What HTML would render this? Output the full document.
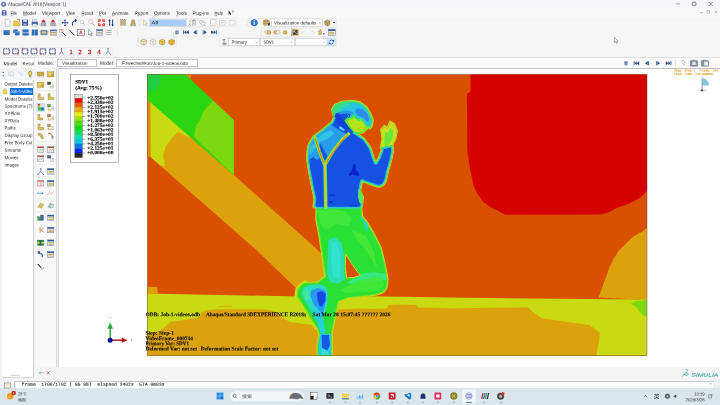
<!DOCTYPE html>
<html lang="en">
<head>
<meta charset="utf-8">
<title>Abaqus/CAE 2018 [Viewport: 1]</title>
<style>
html,body{margin:0;padding:0;}
body{width:720px;height:405px;overflow:hidden;background:#f3f4f6;position:relative;font-family:"Liberation Sans","Noto Sans CJK SC",sans-serif;color:#1a1a1a;}
.abs{position:absolute;}
.t{position:absolute;white-space:pre;line-height:1;}
#titlebar{left:0;top:0;width:720px;height:8.5px;background:#f6f6fa;}
#menubar{left:0;top:8.5px;width:720px;height:9px;background:#f8f8f9;border-bottom:0.6px solid #d8d8da;}
#toolzone{left:0;top:18px;width:720px;height:39px;background:#f6f6f7;}
#ctxbar{left:0;top:56.6px;width:720px;height:11.4px;background:#fafafb;border-top:0.6px solid #e2e2e4;box-sizing:border-box;}
#tree{left:1.6px;top:80px;width:31.2px;height:297.2px;background:#ffffff;border-right:0.7px solid #d4d4d4;border-bottom:0.6px solid #d4d4d4;}
#toolbox{left:35.6px;top:68.6px;width:20.6px;height:299.6px;background:#f9f9fa;border-right:1.2px solid #d6d6d8;}
#viewport{left:57.5px;top:68px;width:662.5px;height:299px;background:#ffffff;border-top:0.6px solid #bfc3c8;border-left:0.6px solid #d5d5d5;box-sizing:border-box;}
#prompt{left:34px;top:367px;width:686px;height:13px;background:#f4f4f5;}
#msg{left:14.4px;top:380.6px;width:699px;height:7px;background:#ffffff;border-top:0.6px solid #c8c8c8;border-left:0.5px solid #c8c8c8;}
#taskbar{left:0;top:387.5px;width:720px;height:17.5px;background:#dbe6ea;}
.menu{font-size:4.6px;top:10.6px;color:#222;}
.tree{font-size:4.4px;left:4px;color:#222;}
.ser{font-family:"Liberation Serif",serif;font-weight:bold;color:#0a0a0a;-webkit-text-stroke:0.1px #0a0a0a;}
.lg{-webkit-text-stroke:0.12px #0a0a0a;}
.mono{font-family:"Liberation Mono",monospace;color:#e09a20;-webkit-text-stroke:0.12px #e09a20;}
</style>
</head>
<body>
<div id="titlebar" class="abs"></div>
<div id="menubar" class="abs"></div>
<div id="toolzone" class="abs"></div>
<div id="ctxbar" class="abs"></div>
<div id="tree" class="abs"></div>
<div id="toolbox" class="abs"></div>
<div id="viewport" class="abs"></div>
<div id="prompt" class="abs"></div>
<div id="msg" class="abs"></div>
<div id="taskbar" class="abs"></div>

<!-- PLOT -->
<svg class="abs" style="left:0;top:0" width="720" height="405" viewBox="0 0 720 405" id="plot">
<defs>
<clipPath id="pc"><rect x="147.5" y="74.5" width="499.5" height="281"/></clipPath>
</defs>
<g clip-path="url(#pc)">
<rect x="147" y="74" width="501" height="282" fill="#d95000"/>
<!-- red blob -->
<path d="M470.5,74 L470.5,92 L467,93.5 L467.3,150 L469.5,166 L473.6,186 L478,195 L483,201.4 L490,207 L498.6,211 L505.5,214.7 L601,214.5 L609,212 L616.7,208 L628,204 L639,198.6 L644,194 L648,189 L648,74 Z" fill="#d50000"/>
<!-- right wedge orange-yellow -->
<path d="M648,227 L641.7,232 L634,236 L627.8,241.7 L619.4,250 L614,258 L609.7,266.7 L606,277 L602.8,286 L598.6,297.5 L648,300 Z" fill="#dca20c"/>
<!-- diagonal band: yellow/orange part -->
<path d="M147,99 L150,99.5 L233.75,175 L315,247.5 L336,268 L336,300 L300,292 L257.5,251 L151,157.5 L147,152 Z" fill="#dca20c"/>
<!-- yellow part of band -->
<path d="M150.5,100 L193,138 L186,136 L178,132 L172,138 L166,146 L163,155 L165,166 L160,165 L151,157.5 Z" fill="#c9d912"/>
<!-- thin orange strip at left edge -->
<rect x="147" y="99" width="3" height="58" fill="#e08a08"/>
<!-- green band -->
<path d="M147,74 L185,74 L233.75,120 L233.75,175 L147,99.5 Z" fill="#2cd512"/>
<!-- lighter green part -->
<path d="M210,103.5 L213.2,100.8 L233.75,120 L233.75,175 L194,137 L196,126 L200,120 L203,112 L207,107 Z" fill="#7dd90f"/>
<path d="M147,74 L160,74 L161,82 L156,90 L147,92 Z" fill="#22cc44"/>
<!-- small orange notch at top -->
<path d="M185,74 L191,74 L191,78.5 L189,78 Z" fill="#e08a08"/>

<!-- floor: yellow -->
<path d="M147,293.5 L300,296.5 L370,296.2 L450,297.6 L530,298.4 L648,299.5 L648,356 L147,356 Z" fill="#c9d912"/>
<!-- orange bit above floor at left -->
<path d="M147,287 L157,287 L158,293.7 L147,293.5 Z" fill="#dca20c"/>
<!-- floor: orange-yellow -->
<path d="M147,333 L160,331 L165,327 L170,322 L185,320 L200,317 L202,312 L208,310 L220,309.3 L262,309.3 L272,310.5 L278,313 L283,318 L290,322 L305,324 L315,325 L336,318 L338,309.5 L360,308.5 L372,309 L387,308.5 L388.5,305 L400,304.5 L416.5,305 L418,307.5 L430,307.8 L450,308.3 L500,307.8 L527.8,307.3 L534,313 L541.7,318 L560,321 L589,325 L595,329 L600,333 L599,342 L596,356 L147,356 Z" fill="#dca20c"/>
<path d="M218,306 L232,305.6 L232,306.6 L218,306.8 Z" fill="#dca20c"/>
<!-- green bit right -->
<path d="M648,300 L636,301 L630.5,304 L636,307 L640,312 L644,316 L648,317 Z" fill="#7dd90f"/>
<!-- FIGURE -->
<defs>
<path id="sil" d="M333.9,117 L331.9,109.5 L334.4,105.1 L342.2,101.6 L352.2,100.6 L360,102.1 L366.7,107.1 L370.6,114 L372.9,120.1 L371.9,126 L370.2,128.9 L367.8,127 L366.7,129 L363.3,132.4 L357.5,134 L364.1,138.5 L370.5,147.5 L373.8,157.8 L375.8,162.7 L378.7,157.8 L381.6,150 L380.7,147 L382.4,138.5 L381.1,129.5 L384.4,125.6 L387.2,128.2 L390,121.5 L394.3,124 L396.9,130.7 L395.6,138.5 L392.6,144.3 L393.3,150 L391.4,159.7 L387.5,173.4 Q386.6,180.5 384.5,183.5 Q382,187.3 378,186.8 L368,183.5 L362.1,181.2 L360.2,190.9 L363.1,196.8 L362.1,206.5 L361.4,208.5 L362.3,216.3 L367.5,223 L373.8,233.6 L380.7,247.3 L384.6,262.9 L387.5,278.5 Q388,288 384,291.5 Q380,294.5 371.9,295.3 L348.5,297.8 L338.7,301.4 L336.8,309.2 L334.8,319 L331.9,332.6 L332,356 L317.3,356 L317.3,344.3 L319.2,334.6 L317.3,328.7 L309.5,317 L301.7,303.4 L296.8,296.6 L297.6,289 L303.6,282.8 L317.3,282.4 L325.1,276.5 L322.2,255.1 L319.2,235.6 L316.3,220 L316.3,208.5 L313.4,206.5 L314.4,198.7 L311.4,185.1 L308.5,169.5 L306.8,158 L307.5,150 L308.7,144.3 L313.4,136.5 L321.2,130.7 L331.9,121.9 Z"/>
<path id="torso" d="M333.9,117 L336,112.5 L341,114 L346,113.5 L349,115.8 L344.4,120.7 L349,127 L353.3,131.8 L357.5,134 L364.1,138.5 L370.5,147.5 L373.8,157.8 L375.8,162.7 L378.7,157.8 L381.6,150 L380.9,147.5 L392.6,145.3 L393.3,150 L391.4,159.7 L387.5,173.4 Q386.6,180.5 384.5,183.5 Q382,187.3 378,186.8 L368,183.5 L362.1,181.2 L360.2,190.9 L363.1,196.8 L362.1,206.5 L361.4,208.8 L316.3,208.8 L313.4,206.5 L314.4,198.7 L311.4,185.1 L308.5,169.5 L306.8,158 L307.5,150 L308.7,144.3 L313.4,136.5 L321.2,130.7 L331.9,121.9 Z"/>
<path id="hair" d="M333.9,117 L331.9,109.5 L334.4,105.1 L342.2,101.6 L352.2,100.6 L360,102.1 L366.7,107.1 L370.6,114 L372.9,120.1 L371.9,126 L370.2,128.9 L367.8,127 L365.6,124 L361,118.5 L358,119.6 L355.5,117.5 L353.3,114.5 L352,117.5 L348,118 L349,115.8 L346,113.5 L341,114 L336,112.5 Z"/>
<path id="hand" d="M382.4,138.5 L381.1,129.5 L384.4,125.6 L387.2,128.2 L390,121.5 L394.3,124 L396.9,130.7 L395.6,138.5 L392.6,144.3 L392.6,145.3 L380.9,147.5 Z"/>
<clipPath id="cs"><use href="#sil"/></clipPath>
<clipPath id="ct"><use href="#torso"/></clipPath>
<clipPath id="ch"><use href="#hair"/></clipPath>
<clipPath id="chd"><use href="#hand"/></clipPath>
</defs>
<g stroke-linejoin="round">
<path d="M305,282.6 L297.6,289 L296.8,296.6 L301.7,303.4 L309.5,317 L316.5,327.5" stroke="#c6de18" stroke-width="4.6" fill="none" stroke-linecap="round"/>
<use href="#sil" fill="#2ae034" stroke="#c4dc18" stroke-width="1.8"/>
<g clip-path="url(#cs)">
<use href="#sil" fill="#2ae034"/>
<!-- trousers shading -->
<path d="M328.5,240 L335,237 L341,242 L344.2,254 L344.4,266 L345,279 L338,283.5 L330,282 L327,274 L327.5,258 Z" fill="#2cdcb4"/>
<path d="M331.5,243 L336.5,241.5 L340,252 L341,266 L340,277 L333,278 L331,262 Z" fill="#30e4d4" opacity=".85"/>
<path d="M361,273.5 L374,272 L386,274 L386.5,280 L374,281 L362,280.5 L352,284 L347,283 Z" fill="#38e890" opacity=".85"/>
<path d="M318,210 L330,209 L345,211 L352,218 L349,226 L336,224 L326,230 L321,226 Z" fill="#44e83c" opacity=".8"/>
<path d="M352,230 L366,236 L374,252 L377,268 L373,262 L366,250 L357,240 Z" fill="#4ce838" opacity=".8"/>
<path d="M360.5,216.5 L363,217.5 L367.5,225 L369,232 L366.5,231 L363.5,224 Z" fill="#28d0d0" opacity=".9"/>
<path d="M360,280 L382,276 L384,286 L378,291 L362,292 L345,293 L340,290 Z" fill="#44e83c" opacity=".8"/>
<!-- bent-leg shoe -->
<path d="M303,288.5 L309,285 L318,284.2 L325,286 L328,292 L327.5,303 L325,312 L322,322 L319,326 L316,320 L311,311 L305,301 L301.5,294 Z" fill="#2cdcc0"/>
<path d="M311,290.5 L318,288 L325.5,290.5 L326.5,300 L324,309 L321.5,320 L319.5,322 L317.5,312 L313,303 L310.5,296 Z" fill="#2898f0"/>
<path d="M317,292.5 L322,291 L325.8,294 L325,301 L322,306.8 L319.5,306 L317.5,300 Z" fill="#1448e0"/>
<path d="M302.5,292 L307.5,288.5 L310,299 L306.5,301.5 Z" fill="#40e8a0"/>
<path d="M311,311 L317,321.5 L320.5,333.5 L326,333.5 L324,322 L321,313 L316,306 Z" fill="#28d0d8"/>
<path d="M316,309 L320.5,316 L323,326 L321,318 Z" fill="#2898f0"/>
<!-- standing foot -->
<path d="M319.5,334 L331,334 L331.2,356 L318.5,356 L318.6,344 Z" fill="#28c8e8"/>
<path d="M321.5,335 L329,335 L330,345 L327,351 L322,348 Z" fill="#1858e8"/>
<path d="M322,348 L328,351 L329,356 L321,356 Z" fill="#2ee0d0"/>
<use href="#sil" fill="none" stroke="#7ce428" stroke-width="1.6"/>
</g>
<!-- leg gap -->
<path d="M345.6,254.1 L352.4,264.8 L360.2,275.6 L353,277.5 L346.5,277.9 L345.4,266.8 Z" fill="#d95000" stroke="#c4dc18" stroke-width="1"/>
<!-- torso -->
<g clip-path="url(#ct)">
<use href="#torso" fill="#1552e2"/>
<!-- upper back lighter patches -->
<path d="M306,151 L308.7,144 L313.4,136.5 L321.2,130.7 L331,124.5 L336,128 L341,131 L346,134 L338,142 L332,150 L328,157 L324,150 L320,143 L319,150 L321,157 L317,160 L313,157 L309,160 L306,160 Z" fill="#2a9cec"/>
<path d="M316,139 L324,133 L331,130.5 L334,134 L327,139 L320,142 L316,148 L311,150 Z" fill="#30c4e6"/>
<path d="M309,147 L313,144 L314,151 L310,155 Z" fill="#30b8ea"/>
<path d="M340,125.5 L346,128 L344,131 L339,128.5 Z" fill="#60d0f0"/>
<!-- collar darker -->
<path d="M334,117 L338,114 L345,121 L350,129 L347,131 L340,126 L336,122 Z" fill="#1040d8"/>
<!-- dark spots on torso -->
<path d="M353.5,164 L355,164.5 L356,170 L359.5,174 L358,176 L353,174.5 L349.5,176 L348.8,174 L352,170 Z" fill="#0a20c8"/>
<rect x="329" y="194.5" width="6" height="1.2" fill="#0a28c8"/><rect x="329.5" y="201" width="2.5" height="2.2" fill="#0a28c8"/>
<rect x="349" y="205.3" width="8" height="1" fill="#0a28c8"/>
<path d="M353.3,131.8 L357.5,134 L364.1,138.5 L370.5,147.5 L373.8,157.8 L375.8,162.7 L378.7,157.8 L381.6,150 L380.9,147.5 L392.6,145.3 L393.3,150 L391.4,159.7 L387.5,173.4 Q386.6,180.5 384.5,183.5 Q382,187.3 378,186.8 L368,183.5 L362.1,181.2 L360.2,190.9 L363.1,196.8 L362.1,206.5 L361.4,208.8 L316.3,208.8 L313.4,206.5 L314.4,198.7 L311.4,185.1 L308.5,169.5 L306.8,158 L307.5,150 L308.7,144.3 L313.4,136.5 L321.2,130.7 L331.9,121.9 L333.9,117" fill="none" stroke="#28b8ea" stroke-width="4"/>
<path d="M353.3,131.8 L357.5,134 L364.1,138.5 L370.5,147.5 L373.8,157.8 L375.8,162.7 L378.7,157.8 L381.6,150 L380.9,147.5 L392.6,145.3 L393.3,150 L391.4,159.7 L387.5,173.4 Q386.6,180.5 384.5,183.5 Q382,187.3 378,186.8 L368,183.5 L362.1,181.2 L360.2,190.9 L363.1,196.8 L362.1,206.5 L361.4,208.8 L316.3,208.8 L313.4,206.5 L314.4,198.7 L311.4,185.1 L308.5,169.5 L306.8,158 L307.5,150 L308.7,144.3 L313.4,136.5 L321.2,130.7 L331.9,121.9 L333.9,117" fill="none" stroke="#38e070" stroke-width="2.2"/>
<use href="#sil" fill="none" stroke="#a8e020" stroke-width="1"/>
<!-- suspenders -->
<path d="M314.6,136.6 L319.3,151.5 L324.6,165" fill="none" stroke="#48e068" stroke-width="3.4"/>
<path d="M349.5,133 L342,139.5 L333,151 L325,164.5 L325.3,180 L325.8,209" fill="none" stroke="#48e068" stroke-width="3.6"/>
<path d="M314.6,136.6 L319.3,151.5 L324.6,165" fill="none" stroke="#d8d020" stroke-width="1.9"/>
<path d="M349.5,133 L342,139.5 L333,151 L325,164.5 L325.3,180 L325.8,209" fill="none" stroke="#d8d020" stroke-width="2"/>
<path d="M315,138 L319.6,152 L323.6,162.5" fill="none" stroke="#e06810" stroke-width="0.9"/>
<path d="M348,134.5 L342,140.5 L333.5,151.5 L326.5,162.5" fill="none" stroke="#e06810" stroke-width="1"/>
<path d="M358.5,189 L361,191 L362.8,197 L362,204 L359.5,203 L358,197 Z" fill="#58e860"/>
</g>
<!-- hair -->
<g clip-path="url(#ch)">
<use href="#hair" fill="#26c4e0"/>
<path d="M357,108 L363,109.5 L367.5,114 L369.5,120 L367,122 L363,117.5 L358.5,116 L355,112 Z" fill="#2c8cec"/>
<path d="M332,114 L339,112.5 L346,112 L351,114 L349,119 L343,122 L336,122 L332,119 Z" fill="#1858e0"/>
<path d="M338,113 L346,110.5 L352,111.5 L354,113.5 L350,114 L346,113 L341,114.5 Z" fill="#2898ee"/>
<path d="M333.9,117 L331.9,109.5 L334.4,105.1 L342.2,101.6 L352.2,100.6 L360,102.1 L366.7,107.1 L370.6,114 L372.9,120.1 L371.9,126 L370.2,128.9 L367.8,127" fill="none" stroke="#38e070" stroke-width="3.4"/>
<path d="M331.9,109.5 L334.4,105.1 L342.2,101.6 L352.2,100.6 L360,102.1 L366.7,107.1 L370.6,114 L372.9,120.1 L371.9,126 L370.2,128.9 L367.8,127" fill="none" stroke="#a8e020" stroke-width="1.2"/>
<path d="M331,110 L334,104.5 L342,101 L349,100.5 L347,103.8 L341,105.5 L337.5,108.5 L336,113 L334.5,117 Z" fill="#38e070"/>
<path d="M337.5,108.5 L341,105.5 L347,103.8 L352,104 L347,106 L342,108 L339,112 L336,113 Z" fill="#30dca0"/>
</g>
<!-- face -->
<path d="M344.4,120.7 L348,118 L352,117.5 L353.3,114.5 L355.5,117.5 L358,119.6 L361,118.5 L365.6,124 L367.8,127 L366.7,129 L363.3,132.4 L357.5,134 L353.3,131.8 L349,127 Z" fill="#5ae840"/>
<path d="M347.5,121 L350,119.5 L353,119.3 L354,117.3 L355.5,119.3 L358.3,121.2 L361,120.5 L364.3,124.5 L365.5,128 L362.8,131 L357.7,132.6 L354,130.8 L350.5,126.5 Z" fill="#b4e21c"/>
<!-- hand -->
<g clip-path="url(#chd)">
<use href="#hand" fill="#c6e21c"/>
<path d="M385,131.5 L387.5,133 L390.5,128 L393.5,131 L392.5,138 L389.5,144 L384.5,148 L384.5,139 Z" fill="#6ae638"/>
<path d="M381.1,129.5 L384.4,125.6 L387.2,128.2 L390,121.5 L394.3,124 L396.9,130.7" fill="none" stroke="#e8b81c" stroke-width="1.8"/>
</g>
</g>


</g>
<rect x="147.5" y="74.5" width="499.5" height="281" fill="none" stroke="#5a3a10" stroke-width="0.4"/>
<rect x="70.4" y="74.2" width="48.2" height="88" fill="#ffffff" stroke="#666" stroke-width="0.5"/>
<rect x="74.8" y="94.30" width="7.6" height="3.95" fill="#dcdcdc"/>
<rect x="74.8" y="98.20" width="7.6" height="4.62" fill="#ee0000"/>
<line x1="74.8" y1="98.20" x2="82.4" y2="98.20" stroke="#222" stroke-width="0.3" opacity="0.55"/>
<rect x="74.8" y="102.77" width="7.6" height="4.62" fill="#ee5800"/>
<line x1="74.8" y1="102.77" x2="82.4" y2="102.77" stroke="#222" stroke-width="0.3" opacity="0.55"/>
<rect x="74.8" y="107.34" width="7.6" height="4.62" fill="#eeaa00"/>
<line x1="74.8" y1="107.34" x2="82.4" y2="107.34" stroke="#222" stroke-width="0.3" opacity="0.55"/>
<rect x="74.8" y="111.91" width="7.6" height="4.62" fill="#e8ee00"/>
<line x1="74.8" y1="111.91" x2="82.4" y2="111.91" stroke="#222" stroke-width="0.3" opacity="0.55"/>
<rect x="74.8" y="116.48" width="7.6" height="4.62" fill="#98e800"/>
<line x1="74.8" y1="116.48" x2="82.4" y2="116.48" stroke="#222" stroke-width="0.3" opacity="0.55"/>
<rect x="74.8" y="121.05" width="7.6" height="4.62" fill="#44e000"/>
<line x1="74.8" y1="121.05" x2="82.4" y2="121.05" stroke="#222" stroke-width="0.3" opacity="0.55"/>
<rect x="74.8" y="125.62" width="7.6" height="4.62" fill="#08e008"/>
<line x1="74.8" y1="125.62" x2="82.4" y2="125.62" stroke="#222" stroke-width="0.3" opacity="0.55"/>
<rect x="74.8" y="130.19" width="7.6" height="4.62" fill="#00e058"/>
<line x1="74.8" y1="130.19" x2="82.4" y2="130.19" stroke="#222" stroke-width="0.3" opacity="0.55"/>
<rect x="74.8" y="134.76" width="7.6" height="4.62" fill="#00e4b0"/>
<line x1="74.8" y1="134.76" x2="82.4" y2="134.76" stroke="#222" stroke-width="0.3" opacity="0.55"/>
<rect x="74.8" y="139.33" width="7.6" height="4.62" fill="#00c8f0"/>
<line x1="74.8" y1="139.33" x2="82.4" y2="139.33" stroke="#222" stroke-width="0.3" opacity="0.55"/>
<rect x="74.8" y="143.90" width="7.6" height="4.62" fill="#0078f0"/>
<line x1="74.8" y1="143.90" x2="82.4" y2="143.90" stroke="#222" stroke-width="0.3" opacity="0.55"/>
<rect x="74.8" y="148.47" width="7.6" height="4.62" fill="#0028f0"/>
<line x1="74.8" y1="148.47" x2="82.4" y2="148.47" stroke="#222" stroke-width="0.3" opacity="0.55"/>
<rect x="74.8" y="153.04" width="7.6" height="4.65" fill="#2a2a2a"/>
<line x1="74.8" y1="153.04" x2="82.4" y2="153.04" stroke="#222" stroke-width="0.3" opacity="0.55"/>
<rect x="74.8" y="94.3" width="7.6" height="63.34" fill="none" stroke="#555" stroke-width="0.35"/>
<line x1="82.4" y1="98.20" x2="85" y2="98.20" stroke="#333" stroke-width="0.4"/>
<line x1="82.4" y1="102.77" x2="85" y2="102.77" stroke="#333" stroke-width="0.4"/>
<line x1="82.4" y1="107.34" x2="85" y2="107.34" stroke="#333" stroke-width="0.4"/>
<line x1="82.4" y1="111.91" x2="85" y2="111.91" stroke="#333" stroke-width="0.4"/>
<line x1="82.4" y1="116.48" x2="85" y2="116.48" stroke="#333" stroke-width="0.4"/>
<line x1="82.4" y1="121.05" x2="85" y2="121.05" stroke="#333" stroke-width="0.4"/>
<line x1="82.4" y1="125.62" x2="85" y2="125.62" stroke="#333" stroke-width="0.4"/>
<line x1="82.4" y1="130.19" x2="85" y2="130.19" stroke="#333" stroke-width="0.4"/>
<line x1="82.4" y1="134.76" x2="85" y2="134.76" stroke="#333" stroke-width="0.4"/>
<line x1="82.4" y1="139.33" x2="85" y2="139.33" stroke="#333" stroke-width="0.4"/>
<line x1="82.4" y1="143.90" x2="85" y2="143.90" stroke="#333" stroke-width="0.4"/>
<line x1="82.4" y1="148.47" x2="85" y2="148.47" stroke="#333" stroke-width="0.4"/>
<line x1="82.4" y1="153.04" x2="85" y2="153.04" stroke="#333" stroke-width="0.4"/>
<line x1="110.2" y1="340" x2="110.2" y2="327" stroke="#28a838" stroke-width="1.5"/><path d="M110.2,322.3 L113,328.8 H107.4 Z" fill="#28a838"/>
<line x1="110.2" y1="340.2" x2="123" y2="340.2" stroke="#b01818" stroke-width="1.5"/><path d="M127.6,340.2 L121.8,337.6 V342.8 Z" fill="#b01818"/>
<circle cx="110.2" cy="340.2" r="2.5" fill="#10109a"/>
<rect x="131" y="339.7" width="0.9" height="0.9" fill="#333"/><rect x="109.8" y="317.2" width="0.8" height="0.8" fill="#333"/>
<path d="M702,78.4 A6.8,6.8 0 0 1 708.8,85.2 H702 Z" fill="#86c8d6" stroke="#5aa0b4" stroke-width="0.3"/>
<line x1="702" y1="76.4" x2="702" y2="90.4" stroke="#8a94a8" stroke-width="0.5"/><line x1="702" y1="86" x2="702" y2="90" stroke="#d04040" stroke-width="0.5"/>
<line x1="698.8" y1="90.4" x2="706.4" y2="90.4" stroke="#a04040" stroke-width="0.4"/><circle cx="702" cy="90.4" r="0.9" fill="#401010"/>
</svg>

<div class="abs" style="left:0;top:0;width:720px;height:405px;will-change:transform;">
<div class="t ser lg" style="left:0;top:0;font-size:5.2px;transform:translate(75.20px,79.55px) scaleX(1.000) rotate(0.03deg);transform-origin:0 0;">SDV1</div>
<div class="t ser lg" style="left:0;top:0;font-size:5.2px;transform:translate(75.20px,85.44px) scaleX(1.045) rotate(0.03deg);transform-origin:0 0;">(Avg: 75%)</div>
<div class="t ser lg" style="left:0;top:0;font-size:5.2px;transform:translate(87.20px,95.50px) scaleX(1.050) rotate(0.03deg);transform-origin:0 0;">+2.550e+02</div>
<div class="t ser lg" style="left:0;top:0;font-size:5.2px;transform:translate(87.20px,100.07px) scaleX(1.050) rotate(0.03deg);transform-origin:0 0;">+2.338e+02</div>
<div class="t ser lg" style="left:0;top:0;font-size:5.2px;transform:translate(87.20px,104.64px) scaleX(1.050) rotate(0.03deg);transform-origin:0 0;">+2.125e+02</div>
<div class="t ser lg" style="left:0;top:0;font-size:5.2px;transform:translate(87.20px,109.20px) scaleX(1.050) rotate(0.03deg);transform-origin:0 0;">+1.913e+02</div>
<div class="t ser lg" style="left:0;top:0;font-size:5.2px;transform:translate(87.20px,113.78px) scaleX(1.050) rotate(0.03deg);transform-origin:0 0;">+1.700e+02</div>
<div class="t ser lg" style="left:0;top:0;font-size:5.2px;transform:translate(87.20px,118.35px) scaleX(1.050) rotate(0.03deg);transform-origin:0 0;">+1.488e+02</div>
<div class="t ser lg" style="left:0;top:0;font-size:5.2px;transform:translate(87.20px,122.92px) scaleX(1.050) rotate(0.03deg);transform-origin:0 0;">+1.275e+02</div>
<div class="t ser lg" style="left:0;top:0;font-size:5.2px;transform:translate(87.20px,127.48px) scaleX(1.050) rotate(0.03deg);transform-origin:0 0;">+1.063e+02</div>
<div class="t ser lg" style="left:0;top:0;font-size:5.2px;transform:translate(87.20px,132.06px) scaleX(1.050) rotate(0.03deg);transform-origin:0 0;">+8.500e+01</div>
<div class="t ser lg" style="left:0;top:0;font-size:5.2px;transform:translate(87.20px,136.63px) scaleX(1.050) rotate(0.03deg);transform-origin:0 0;">+6.375e+01</div>
<div class="t ser lg" style="left:0;top:0;font-size:5.2px;transform:translate(87.20px,141.20px) scaleX(1.050) rotate(0.03deg);transform-origin:0 0;">+4.250e+01</div>
<div class="t ser lg" style="left:0;top:0;font-size:5.2px;transform:translate(87.20px,145.77px) scaleX(1.050) rotate(0.03deg);transform-origin:0 0;">+2.125e+01</div>
<div class="t ser lg" style="left:0;top:0;font-size:5.2px;transform:translate(87.20px,150.34px) scaleX(1.050) rotate(0.03deg);transform-origin:0 0;">+0.000e+00</div>
<div class="t mono" style="left:0;top:0;font-size:3.1px;transform:translate(674.00px,69.60px) scaleX(0.941) rotate(0.03deg);transform-origin:0 0;">Step: Step-1</div>
<div class="t mono" style="left:0;top:0;font-size:3.1px;transform:translate(699.60px,69.60px) scaleX(1.011) rotate(0.03deg);transform-origin:0 0;">Frame: 744</div>
<div class="t mono" style="left:0;top:0;font-size:3.1px;transform:translate(674.00px,73.00px) scaleX(0.948) rotate(0.03deg);transform-origin:0 0;">Total Time: 743.000000</div>
<div class="t ser" style="left:0;top:0;font-size:5.6px;transform:translate(145.50px,312.21px) scaleX(0.973) rotate(0.03deg);transform-origin:0 0;">ODB: Job-1-videos.odb</div>
<div class="t ser" style="left:0;top:0;font-size:5.6px;transform:translate(206.00px,312.21px) scaleX(0.942) rotate(0.03deg);transform-origin:0 0;">Abaqus/Standard 3DEXPERIENCE R2018x</div>
<div class="t ser" style="left:0;top:0;font-size:5.6px;transform:translate(312.60px,312.21px) scaleX(0.983) rotate(0.03deg);transform-origin:0 0;">Sat Mar 28 15:07:45 ?????? 2026</div>
<div class="t ser" style="left:0;top:0;font-size:5.6px;transform:translate(145.50px,330.81px) scaleX(0.976) rotate(0.03deg);transform-origin:0 0;">Step: Step-1</div>
<div class="t ser" style="left:0;top:0;font-size:5.6px;transform:translate(145.50px,336.21px) scaleX(0.964) rotate(0.03deg);transform-origin:0 0;">VideoFrame_000744</div>
<div class="t ser" style="left:0;top:0;font-size:5.6px;transform:translate(145.50px,341.31px) scaleX(0.914) rotate(0.03deg);transform-origin:0 0;">Primary Var: SDV1</div>
<div class="t ser" style="left:0;top:0;font-size:5.6px;transform:translate(145.50px,346.41px) scaleX(0.971) rotate(0.03deg);transform-origin:0 0;">Deformed Var: not set</div>
<div class="t ser" style="left:0;top:0;font-size:5.6px;transform:translate(200.80px,346.41px) scaleX(0.962) rotate(0.03deg);transform-origin:0 0;">Deformation Scale Factor: not set</div>
<svg class="abs" style="left:0;top:0" width="720" height="405" viewBox="0 0 720 405">
<circle cx="3.60" cy="4.20" r="2.3" fill="#7a86c8" stroke="#4a5090" stroke-width="0.5"/>
<circle cx="3.60" cy="4.20" r="0.9" fill="#e8e8f4"/>
<line x1="676.00" y1="3.90" x2="680.00" y2="3.90" stroke="#555" stroke-width="0.5" />
<rect x="692.30" y="2.20" width="3.60" height="3.40" fill="none" stroke="#333" stroke-width="0.6" rx="0.8"/>
<path d="M708.7,1.9 L712.7,5.9 M712.7,1.9 L708.7,5.9" fill="none" stroke="#333" stroke-width="0.55" />
<line x1="700.30" y1="12.60" x2="702.50" y2="12.60" stroke="#777" stroke-width="0.5" />
<rect x="707.00" y="10.80" width="2.20" height="2.20" fill="none" stroke="#777" stroke-width="0.45"/>
<path d="M715,10.9 L717.2,13.1 M717.2,10.9 L715,13.1" fill="none" stroke="#777" stroke-width="0.45" />
<rect x="1.80" y="10.20" width="4.60" height="5.20" fill="#3b57a8" rx="0.5"/>
<path d="M2.6,11.3 H5.6 M4.1,11.3 V14.6 M3.2,14.6 H5" fill="none" stroke="#fff" stroke-width="0.7" />
<line x1="10.50" y1="15.70" x2="12.50" y2="15.70" stroke="#333" stroke-width="0.35" />
<line x1="23.00" y1="15.70" x2="26.60" y2="15.70" stroke="#333" stroke-width="0.35" />
<line x1="47.50" y1="15.70" x2="49.30" y2="15.70" stroke="#333" stroke-width="0.35" />
<line x1="66.00" y1="15.70" x2="68.40" y2="15.70" stroke="#333" stroke-width="0.35" />
<line x1="81.50" y1="15.70" x2="83.90" y2="15.70" stroke="#333" stroke-width="0.35" />
<line x1="99.00" y1="15.70" x2="101.00" y2="15.70" stroke="#333" stroke-width="0.35" />
<line x1="112.00" y1="15.70" x2="114.60" y2="15.70" stroke="#333" stroke-width="0.35" />
<line x1="137.00" y1="15.70" x2="138.80" y2="15.70" stroke="#333" stroke-width="0.35" />
<line x1="154.00" y1="15.70" x2="156.80" y2="15.70" stroke="#333" stroke-width="0.35" />
<line x1="176.00" y1="15.70" x2="178.00" y2="15.70" stroke="#333" stroke-width="0.35" />
<line x1="203.00" y1="15.70" x2="204.20" y2="15.70" stroke="#333" stroke-width="0.35" />
<line x1="214.50" y1="15.70" x2="217.10" y2="15.70" stroke="#333" stroke-width="0.35" />
<rect x="1.60" y="19.50" width="0.50" height="0.50" fill="#b8b8b8"/>
<rect x="1.60" y="20.70" width="0.50" height="0.50" fill="#b8b8b8"/>
<rect x="1.60" y="21.90" width="0.50" height="0.50" fill="#b8b8b8"/>
<rect x="1.60" y="23.10" width="0.50" height="0.50" fill="#b8b8b8"/>
<rect x="1.60" y="24.30" width="0.50" height="0.50" fill="#b8b8b8"/>
<rect x="1.60" y="25.50" width="0.50" height="0.50" fill="#b8b8b8"/>
<path d="M5.2,19.3 H8.6 L10,20.8 V26.2 H5.2 Z" fill="#ffffff" stroke="#8a8a8a" stroke-width="0.45" />
<path d="M13.6,21 H16 L16.6,21.8 H19.8 V26 H13.6 Z" fill="#f2c84a" stroke="#b08a20" stroke-width="0.4" />
<path d="M17,19.2 L19.6,19.2 L19.6,21.2" fill="none" stroke="#d04020" stroke-width="0.7" />
<rect x="22.00" y="19.60" width="6.00" height="6.20" fill="#3d5c9c" rx="0.4"/>
<rect x="23.20" y="19.60" width="3.60" height="2.20" fill="#dfe6f2"/>
<rect x="23.40" y="23.40" width="3.20" height="2.40" fill="#9fb0d0"/>
<rect x="31.60" y="21.60" width="6.20" height="3.60" fill="#4a68a8" rx="0.5"/>
<rect x="32.80" y="19.60" width="3.80" height="2.20" fill="#e8ecf4" stroke="#7080a0" stroke-width="0.3"/>
<rect x="32.80" y="24.00" width="3.80" height="2.20" fill="#f4f4f4" stroke="#7080a0" stroke-width="0.3"/>
<path d="M41.9,21.2 Q43.5,17.6 45.1,21.2 V22.6 H41.9 Z" fill="#d82828" />
<path d="M41.2,22.6 H45.8 L46.3,26 H40.7 Z" fill="#a8adb6" stroke="#80858e" stroke-width="0.3" />
<path d="M51.4,21.2 Q53,17.6 54.6,21.2 V22.6 H51.4 Z" fill="#d82828" />
<path d="M50.7,22.6 H55.3 L55.8,26 H50.2 Z" fill="#a8adb6" stroke="#80858e" stroke-width="0.3" />
<line x1="59.00" y1="19.50" x2="59.00" y2="26.00" stroke="#d0d0d0" stroke-width="0.5" />
<rect x="60.60" y="19.50" width="0.50" height="0.50" fill="#b8b8b8"/>
<rect x="60.60" y="20.70" width="0.50" height="0.50" fill="#b8b8b8"/>
<rect x="60.60" y="21.90" width="0.50" height="0.50" fill="#b8b8b8"/>
<rect x="60.60" y="23.10" width="0.50" height="0.50" fill="#b8b8b8"/>
<rect x="60.60" y="24.30" width="0.50" height="0.50" fill="#b8b8b8"/>
<rect x="60.60" y="25.50" width="0.50" height="0.50" fill="#b8b8b8"/>
<path d="M65,19.8 V25.6 M62.1,22.7 H67.9" fill="none" stroke="#2a3c98" stroke-width="0.75" />
<path d="M65,19 L66,20.4 H64 Z M65,26.4 L66,25 H64 Z M61.4,22.7 L62.8,21.7 V23.7 Z M68.6,22.7 L67.2,21.7 V23.7 Z" fill="#2a3c98" />
<path d="M72.6,25.6 Q71.6,21.2 75.4,20.6" fill="none" stroke="#1e2c70" stroke-width="1.0" />
<path d="M75,19 L77.4,20.6 L75,22.2 Z" fill="#1e2c70" />
<circle cx="82.00" cy="22.00" r="1.7" fill="#f4f4f4" stroke="#b0b0b0" stroke-width="0.5"/>
<line x1="83.20" y1="23.30" x2="85.20" y2="25.60" stroke="#b0b0b0" stroke-width="0.8" />
<circle cx="90.60" cy="21.60" r="2.1" fill="#fbeeee" stroke="#d8a8a8" stroke-width="0.5"/>
<line x1="92.20" y1="23.30" x2="94.60" y2="26.00" stroke="#b89898" stroke-width="0.9" />
<rect x="98.00" y="19.20" width="7.00" height="7.00" fill="#e44a34" rx="0.6"/>
<path d="M101.5,19.2 V26.2 M98,22.7 H105" fill="none" stroke="#fff" stroke-width="1.3" />
<rect x="100.30" y="21.50" width="2.40" height="2.40" fill="#fff"/>
<path d="M99.2,20.4 L100.4,21.6 M103.8,20.4 L102.6,21.6 M99.2,25 L100.4,23.8 M103.8,25 L102.6,23.8" fill="none" stroke="#fff" stroke-width="0.5" />
<path d="M109.6,25.8 V20 M112.6,19.6 V25.4" fill="none" stroke="#1e2c70" stroke-width="0.9" />
<path d="M109.6,18.9 L110.9,20.8 H108.3 Z M112.6,26.5 L113.9,24.6 H111.3 Z" fill="#1e2c70" />
<line x1="117.50" y1="19.50" x2="117.50" y2="26.00" stroke="#d0d0d0" stroke-width="0.5" />
<rect x="120.60" y="19.80" width="1.20" height="5.80" fill="#c8b070" stroke="#8a7840" stroke-width="0.3"/>
<rect x="122.50" y="19.80" width="1.20" height="5.80" fill="#c8b070" stroke="#8a7840" stroke-width="0.3"/>
<rect x="124.40" y="19.80" width="1.20" height="5.80" fill="#c8b070" stroke="#8a7840" stroke-width="0.3"/>
<path d="M130.4,25.8 L132,19.8 H134.2 L135.8,25.8 H133.8 L133.1,22 L132.4,25.8 Z" fill="#c8b070" stroke="#7a6830" stroke-width="0.35" />
<line x1="139.00" y1="19.50" x2="139.00" y2="26.00" stroke="#d0d0d0" stroke-width="0.5" />
<rect x="140.60" y="19.50" width="0.50" height="0.50" fill="#b8b8b8"/>
<rect x="140.60" y="20.70" width="0.50" height="0.50" fill="#b8b8b8"/>
<rect x="140.60" y="21.90" width="0.50" height="0.50" fill="#b8b8b8"/>
<rect x="140.60" y="23.10" width="0.50" height="0.50" fill="#b8b8b8"/>
<rect x="140.60" y="24.30" width="0.50" height="0.50" fill="#b8b8b8"/>
<rect x="140.60" y="25.50" width="0.50" height="0.50" fill="#b8b8b8"/>
<path d="M143.6,19.6 L143.6,25.2 L145,24 L146,26.2 L146.9,25.8 L145.9,23.7 L147.6,23.5 Z" fill="#fff8e0" stroke="#a09060" stroke-width="0.4" />
<rect x="149.50" y="19.00" width="41.00" height="7.60" fill="#ffffff" stroke="#a8b0bc" stroke-width="0.4"/>
<rect x="150.00" y="19.50" width="36.50" height="6.60" fill="#a9cdf2"/>
<path d="M188.4,21.6 L189.2,20.6 L190,21.6 Z M188.4,23.8 L189.2,24.8 L190,23.8 Z" fill="#555" />
<rect x="192.20" y="20.60" width="3.40" height="4.40" fill="#e8e8e8" stroke="#909090" stroke-width="0.4"/>
<path d="M193,20.6 V19.6 H194.8 V20.6" fill="none" stroke="#606060" stroke-width="0.4" />
<line x1="193.20" y1="22.00" x2="194.60" y2="22.00" stroke="#606060" stroke-width="0.4" />
<line x1="193.20" y1="23.40" x2="194.60" y2="23.40" stroke="#606060" stroke-width="0.4" />
<circle cx="201.50" cy="22.00" r="1.9" fill="#f0f0f0" stroke="#a0a0a0" stroke-width="0.45"/>
<circle cx="203.20" cy="23.60" r="1.9" fill="#f4f4f4" stroke="#909090" stroke-width="0.45"/>
<line x1="204.60" y1="25.00" x2="205.60" y2="26.20" stroke="#808080" stroke-width="0.6" />
<rect x="210.40" y="19.80" width="5.60" height="5.60" fill="#fafafa" stroke="#b0b0b0" stroke-width="0.45"/>
<rect x="219.40" y="20.40" width="5.60" height="4.60" fill="#fafafa" stroke="#b8b8b8" stroke-width="0.45"/>
<line x1="221.00" y1="22.70" x2="223.60" y2="22.70" stroke="#909090" stroke-width="0.5" />
<path d="M229.4,20.4 H234.8 V24.4 Q232,26.4 229.4,24.4 Z" fill="#fafafa" stroke="#b8b8b8" stroke-width="0.45" />
<rect x="191.40" y="18.80" width="45.40" height="8.00" fill="none" stroke="#dadada" stroke-width="0.35"/>
<rect x="246.80" y="19.50" width="0.50" height="0.50" fill="#b8b8b8"/>
<rect x="246.80" y="20.70" width="0.50" height="0.50" fill="#b8b8b8"/>
<rect x="246.80" y="21.90" width="0.50" height="0.50" fill="#b8b8b8"/>
<rect x="246.80" y="23.10" width="0.50" height="0.50" fill="#b8b8b8"/>
<rect x="246.80" y="24.30" width="0.50" height="0.50" fill="#b8b8b8"/>
<rect x="246.80" y="25.50" width="0.50" height="0.50" fill="#b8b8b8"/>
<circle cx="254.20" cy="22.70" r="3.3" fill="#3a72c4" stroke="#2a5498" stroke-width="0.4"/>
<rect x="253.70" y="21.90" width="1.00" height="2.90" fill="#fff"/>
<circle cx="254.20" cy="20.70" r="0.6" fill="#fff"/>
<path d="M263,22.6 Q263,19.6 266.4,19.6 Q269.6,19.8 269.4,22.4 Q269.2,24 267.4,23.8 Q266.6,25.8 265,25.6 Q263,25 263,22.6 Z" fill="#d8b060" stroke="#806020" stroke-width="0.4" />
<circle cx="265.00" cy="21.40" r="0.6" fill="#c03020"/>
<circle cx="267.30" cy="21.20" r="0.6" fill="#2050c0"/>
<circle cx="264.80" cy="23.60" r="0.6" fill="#20a040"/>
<rect x="267.80" y="23.00" width="2.00" height="2.60" fill="#404040"/>
<rect x="271.60" y="19.00" width="50.80" height="7.60" fill="#ffffff" stroke="#a8b0bc" stroke-width="0.4"/>
<path d="M318.6,22 L319.6,23.2 L320.6,22" fill="none" stroke="#666" stroke-width="0.4" />
<path d="M324.8,21.2 L327.4,19.8 L330,21.2 V24.6 L327.4,26 L324.8,24.6 Z" fill="#c8a858" stroke="#6a5420" stroke-width="0.4" />
<path d="M324.8,21.2 L327.4,22.6 L330,21.2 M327.4,22.6 V26" fill="none" stroke="#6a5420" stroke-width="0.35" />
<path d="M332.8,22 H335.2 L334,23.6 Z" fill="#333" />
<rect x="248.40" y="18.60" width="88.40" height="8.40" fill="none" stroke="#dcdcdc" stroke-width="0.35"/>
<rect x="1.60" y="29.20" width="0.50" height="0.50" fill="#b8b8b8"/>
<rect x="1.60" y="30.40" width="0.50" height="0.50" fill="#b8b8b8"/>
<rect x="1.60" y="31.60" width="0.50" height="0.50" fill="#b8b8b8"/>
<rect x="1.60" y="32.80" width="0.50" height="0.50" fill="#b8b8b8"/>
<rect x="1.60" y="34.00" width="0.50" height="0.50" fill="#b8b8b8"/>
<rect x="1.60" y="35.20" width="0.50" height="0.50" fill="#b8b8b8"/>
<rect x="3.50" y="30.00" width="6.20" height="5.00" fill="#2f6cb4" rx="0.3"/>
<rect x="3.50" y="30.00" width="6.20" height="1.20" fill="#5a98d8"/>
<rect x="13.20" y="29.40" width="4.60" height="3.60" fill="#2f6cb4" rx="0.3"/>
<rect x="14.80" y="31.60" width="4.80" height="3.80" fill="#2f6cb4" stroke="#dfe8f4" stroke-width="0.3" rx="0.3"/>
<rect x="14.80" y="31.60" width="4.80" height="1.00" fill="#5a98d8"/>
<rect x="22.50" y="29.40" width="6.20" height="2.80" fill="#2f6cb4" rx="0.3"/>
<rect x="22.50" y="32.70" width="6.20" height="2.80" fill="#2f6cb4" rx="0.3"/>
<rect x="22.50" y="29.40" width="6.20" height="0.90" fill="#5a98d8"/>
<rect x="22.50" y="32.70" width="6.20" height="0.90" fill="#5a98d8"/>
<rect x="31.70" y="29.40" width="2.90" height="6.10" fill="#2f6cb4" rx="0.3"/>
<rect x="35.00" y="29.40" width="2.90" height="6.10" fill="#2f6cb4" rx="0.3"/>
<rect x="40.80" y="30.20" width="6.40" height="4.60" fill="#5a80b8" stroke="#3a5a90" stroke-width="0.4" rx="0.4"/>
<rect x="41.80" y="31.40" width="4.40" height="2.20" fill="#e8c860"/>
<rect x="50.20" y="29.80" width="6.60" height="5.40" fill="#e8ecf0" stroke="#6a7a90" stroke-width="0.4"/>
<rect x="50.20" y="29.80" width="6.60" height="1.40" fill="#4a78b8"/>
<rect x="51.00" y="32.00" width="5.00" height="1.00" fill="#c8a850"/>
<rect x="51.00" y="33.60" width="5.00" height="1.00" fill="#c8a850"/>
<rect x="59.60" y="29.20" width="3.40" height="3.40" fill="#fff" stroke="#907060" stroke-width="0.4"/>
<path d="M60.6,30 H62 V31.6" fill="none" stroke="#c03030" stroke-width="0.5" />
<line x1="62.60" y1="32.40" x2="65.60" y2="35.60" stroke="#1e2c70" stroke-width="1.0" />
<line x1="69.00" y1="29.60" x2="74.00" y2="35.00" stroke="#1e2c70" stroke-width="0.9" />
<path d="M74.6,35.6 L72.4,34.8 L73.8,33.4 Z" fill="#1e2c70" />
<rect x="77.60" y="29.20" width="6.60" height="6.60" fill="#ffffff" stroke="#505050" stroke-width="0.5"/>
<path d="M79.4,34.4 L80.9,30.4 L82.4,34.4 M80,33 H81.8" fill="none" stroke="#c82020" stroke-width="0.7" />
<path d="M88.6,29.6 L88.6,35 L90,33.8 L91,36 L91.9,35.6 L90.9,33.5 L92.6,33.3 Z" fill="#fff" stroke="#404040" stroke-width="0.45" />
<rect x="96.40" y="29.60" width="6.40" height="5.60" fill="#eef0f4" stroke="#5a6a80" stroke-width="0.4"/>
<rect x="96.40" y="29.60" width="6.40" height="1.40" fill="#4a78b8"/>
<rect x="97.20" y="31.80" width="4.80" height="1.00" fill="#c8a850"/>
<rect x="97.20" y="33.40" width="4.80" height="1.00" fill="#9ab0d0"/>
<rect x="105.60" y="30.00" width="1.00" height="1.00" fill="#c8a850"/>
<line x1="107.20" y1="30.50" x2="111.60" y2="30.50" stroke="#5a6a80" stroke-width="0.5" />
<rect x="105.60" y="32.00" width="1.00" height="1.00" fill="#c8a850"/>
<line x1="107.20" y1="32.50" x2="111.60" y2="32.50" stroke="#5a6a80" stroke-width="0.5" />
<rect x="105.60" y="34.00" width="1.00" height="1.00" fill="#c8a850"/>
<line x1="107.20" y1="34.50" x2="111.60" y2="34.50" stroke="#5a6a80" stroke-width="0.5" />
<line x1="117.50" y1="29.20" x2="117.50" y2="35.60" stroke="#d0d0d0" stroke-width="0.5" />
<rect x="171.60" y="28.00" width="46.40" height="8.60" fill="#f8f9fb" stroke="#d6d8dc" stroke-width="0.4" rx="0.6"/>
<rect x="173.00" y="29.60" width="0.50" height="0.50" fill="#b8b8b8"/>
<rect x="173.00" y="30.80" width="0.50" height="0.50" fill="#b8b8b8"/>
<rect x="173.00" y="32.00" width="0.50" height="0.50" fill="#b8b8b8"/>
<rect x="173.00" y="33.20" width="0.50" height="0.50" fill="#b8b8b8"/>
<rect x="173.00" y="34.40" width="0.50" height="0.50" fill="#b8b8b8"/>
<rect x="175.60" y="30.30" width="1.00" height="4.00" fill="#27457f"/>
<rect x="177.40" y="30.30" width="1.00" height="4.00" fill="#27457f"/>
<rect x="183.30" y="30.30" width="0.80" height="4.00" fill="#27457f"/>
<path d="M184.1,32.3 L186.29999999999998,30.299999999999997 V34.3 Z M186.29999999999998,32.3 L188.79999999999998,30.299999999999997 V34.3 Z" fill="#27457f" />
<path d="M193.3,32.3 L195.9,30.199999999999996 V34.4 Z" fill="#27457f" />
<rect x="196.40" y="30.30" width="0.80" height="4.00" fill="#27457f"/>
<rect x="202.70" y="30.30" width="0.80" height="4.00" fill="#27457f"/>
<path d="M206.7,32.3 L204.1,30.199999999999996 V34.4 Z" fill="#27457f" />
<path d="M211.20000000000002,30.299999999999997 L213.70000000000002,32.3 L211.20000000000002,34.3 Z M213.70000000000002,30.299999999999997 L215.9,32.3 L213.70000000000002,34.3 Z" fill="#27457f" />
<rect x="215.90" y="30.30" width="0.80" height="4.00" fill="#27457f"/>
<rect x="261.40" y="29.20" width="0.50" height="0.50" fill="#b8b8b8"/>
<rect x="261.40" y="30.40" width="0.50" height="0.50" fill="#b8b8b8"/>
<rect x="261.40" y="31.60" width="0.50" height="0.50" fill="#b8b8b8"/>
<rect x="261.40" y="32.80" width="0.50" height="0.50" fill="#b8b8b8"/>
<rect x="261.40" y="34.00" width="0.50" height="0.50" fill="#b8b8b8"/>
<rect x="261.40" y="35.20" width="0.50" height="0.50" fill="#b8b8b8"/>
<circle cx="266.80" cy="32.30" r="1.9" fill="#f4f0e4" stroke="#a09070" stroke-width="0.4"/>
<circle cx="269.00" cy="32.30" r="1.9" fill="#e0b860" stroke="#907030" stroke-width="0.4"/>
<circle cx="275.60" cy="32.30" r="1.9" fill="#e0b860" stroke="#907030" stroke-width="0.4"/>
<circle cx="278.00" cy="32.30" r="1.9" fill="#f4f0e4" stroke="#a09070" stroke-width="0.4"/>
<circle cx="285.20" cy="32.30" r="1.9" fill="#e8b048" stroke="#a07020" stroke-width="0.4"/>
<rect x="291.60" y="29.00" width="7.00" height="6.80" fill="#f6e2c0" stroke="#d89030" stroke-width="0.5"/>
<rect x="292.60" y="29.80" width="5.00" height="5.00" fill="#3a3a3a"/>
<path d="M293.6,30.8 L296.8,34 M293.6,30.8 H295.6 M293.6,30.8 V32.8" fill="none" stroke="#fff" stroke-width="0.6" />
<path d="M302.4,33.6 Q302.4,30.6 305.4,31" fill="none" stroke="#d0d0d0" stroke-width="0.6" />
<path d="M311,31 Q314,30.6 314,33.6" fill="none" stroke="#d0d0d0" stroke-width="0.6" />
<rect x="319.40" y="29.20" width="1.80" height="1.80" fill="#c8a048"/>
<rect x="318.80" y="31.20" width="3.00" height="3.60" fill="#d8b868" stroke="#907030" stroke-width="0.3"/>
<rect x="323.00" y="33.00" width="1.40" height="1.40" fill="#4060a0"/>
<rect x="328.40" y="29.40" width="6.80" height="5.80" fill="#eef0f4" stroke="#3a5a8a" stroke-width="0.4"/>
<rect x="328.40" y="29.40" width="6.80" height="1.60" fill="#2a5a9a"/>
<rect x="329.20" y="31.80" width="5.20" height="1.00" fill="#c8a850"/>
<rect x="329.20" y="33.40" width="5.20" height="1.00" fill="#c8a850"/>
<rect x="260.40" y="28.40" width="76.40" height="8.00" fill="none" stroke="#dcdcdc" stroke-width="0.35"/>
<rect x="138.60" y="39.00" width="0.50" height="0.50" fill="#b8b8b8"/>
<rect x="138.60" y="40.20" width="0.50" height="0.50" fill="#b8b8b8"/>
<rect x="138.60" y="41.40" width="0.50" height="0.50" fill="#b8b8b8"/>
<rect x="138.60" y="42.60" width="0.50" height="0.50" fill="#b8b8b8"/>
<rect x="138.60" y="43.80" width="0.50" height="0.50" fill="#b8b8b8"/>
<rect x="138.60" y="45.00" width="0.50" height="0.50" fill="#b8b8b8"/>
<path d="M140.79999999999998,40.6 L143.2,39.2 L146.4,40.4 V43.8 L143.79999999999998,45 L140.79999999999998,43.8 Z" fill="#f6ecd0" stroke="#8a6a20" stroke-width="0.4" />
<path d="M140.79999999999998,40.6 L143.79999999999998,41.8 L146.4,40.4 M143.79999999999998,41.8 V45" fill="none" stroke="#8a6a20" stroke-width="0.35" />
<path d="M150.2,40.6 L152.6,39.2 L155.8,40.4 V43.8 L153.2,45 L150.2,43.8 Z" fill="#faf6ea" stroke="#a09070" stroke-width="0.4" />
<path d="M150.2,40.6 L153.2,41.8 L155.8,40.4 M153.2,41.8 V45" fill="none" stroke="#a09070" stroke-width="0.35" />
<path d="M159.39999999999998,40.6 L161.79999999999998,39.2 L165.0,40.4 V43.8 L162.39999999999998,45 L159.39999999999998,43.8 Z" fill="#f0c860" stroke="#8a6a20" stroke-width="0.4" />
<path d="M159.39999999999998,40.6 L162.39999999999998,41.8 L165.0,40.4 M162.39999999999998,41.8 V45" fill="none" stroke="#8a6a20" stroke-width="0.35" />
<path d="M168.79999999999998,40.6 L171.2,39.2 L174.4,40.4 V43.8 L171.79999999999998,45 L168.79999999999998,43.8 Z" fill="#f0b838" stroke="#8a6a20" stroke-width="0.4" />
<path d="M168.79999999999998,40.6 L171.79999999999998,41.8 L174.4,40.4 M171.79999999999998,41.8 V45" fill="none" stroke="#8a6a20" stroke-width="0.35" />
<rect x="137.60" y="38.00" width="39.00" height="8.20" fill="none" stroke="#dcdcdc" stroke-width="0.35"/>
<rect x="219.60" y="39.00" width="0.50" height="0.50" fill="#b8b8b8"/>
<rect x="219.60" y="40.20" width="0.50" height="0.50" fill="#b8b8b8"/>
<rect x="219.60" y="41.40" width="0.50" height="0.50" fill="#b8b8b8"/>
<rect x="219.60" y="42.60" width="0.50" height="0.50" fill="#b8b8b8"/>
<rect x="219.60" y="43.80" width="0.50" height="0.50" fill="#b8b8b8"/>
<rect x="219.60" y="45.00" width="0.50" height="0.50" fill="#b8b8b8"/>
<path d="M222.6,39.6 H225.4 M224,39.6 V43.4 M222.4,43.4 H226.6 M222.4,44.8 H226.6" fill="none" stroke="#333" stroke-width="0.5" />
<rect x="228.60" y="38.40" width="31.00" height="7.40" fill="#fff" stroke="#a8b0bc" stroke-width="0.4"/>
<path d="M255.6,41.6 L256.6,42.8 L257.6,41.6" fill="none" stroke="#666" stroke-width="0.4" />
<rect x="260.80" y="38.40" width="33.60" height="7.40" fill="#fff" stroke="#a8b0bc" stroke-width="0.4"/>
<path d="M290.4,41.6 L291.4,42.8 L292.4,41.6" fill="none" stroke="#666" stroke-width="0.4" />
<rect x="295.60" y="38.40" width="31.40" height="7.40" fill="#fff" stroke="#a8b0bc" stroke-width="0.4"/>
<path d="M322.8,41.6 L323.8,42.8 L324.8,41.6" fill="none" stroke="#666" stroke-width="0.4" />
<rect x="327.60" y="38.40" width="7.60" height="7.40" fill="#d4e6f8" stroke="#a8c0dc" stroke-width="0.35"/>
<path d="M329.4,41.2 Q331.4,38.8 333.4,41" fill="none" stroke="#1e50b0" stroke-width="0.8" />
<path d="M333.4,43 Q331.4,45.4 329.4,43.2" fill="none" stroke="#1e50b0" stroke-width="0.8" />
<path d="M334.2,39.8 L334,42 L332.2,41 Z M328.6,44.4 L328.8,42.2 L330.6,43.2 Z" fill="#1e50b0" />
<rect x="218.60" y="37.80" width="118.20" height="8.60" fill="none" stroke="#dcdcdc" stroke-width="0.35"/>
<rect x="1.60" y="48.40" width="0.50" height="0.50" fill="#b8b8b8"/>
<rect x="1.60" y="49.60" width="0.50" height="0.50" fill="#b8b8b8"/>
<rect x="1.60" y="50.80" width="0.50" height="0.50" fill="#b8b8b8"/>
<rect x="1.60" y="52.00" width="0.50" height="0.50" fill="#b8b8b8"/>
<rect x="1.60" y="53.20" width="0.50" height="0.50" fill="#b8b8b8"/>
<rect x="1.60" y="54.40" width="0.50" height="0.50" fill="#b8b8b8"/>
<rect x="3.70" y="48.90" width="5.6" height="5" fill="none" stroke="#1c2a70" stroke-width="0.9" stroke-dasharray="1.5 0.55"/>
<path d="M3.6,52.5 V54.3 H5.0" fill="none" stroke="#c83028" stroke-width="0.55" />
<rect x="12.70" y="48.90" width="5.6" height="5" fill="none" stroke="#1c2a70" stroke-width="0.9" stroke-dasharray="1.5 0.55"/>
<path d="M18.400000000000002,52.5 V54.3 H17.0" fill="none" stroke="#c83028" stroke-width="0.55" />
<rect x="22.20" y="48.90" width="5.6" height="5" fill="none" stroke="#1c2a70" stroke-width="0.9" stroke-dasharray="1.5 0.55"/>
<path d="M22.099999999999998,47.5 V49.3 H23.5" fill="none" stroke="#c83028" stroke-width="0.55" />
<rect x="31.20" y="48.90" width="5.6" height="5" fill="none" stroke="#1c2a70" stroke-width="0.9" stroke-dasharray="1.5 0.55"/>
<path d="M36.9,47.5 V49.3 H35.5" fill="none" stroke="#c83028" stroke-width="0.55" />
<rect x="40.20" y="48.90" width="5.6" height="5" fill="none" stroke="#1c2a70" stroke-width="0.9" stroke-dasharray="1.5 0.55"/>
<path d="M40.1,52.5 V54.3 H41.5" fill="none" stroke="#c83028" stroke-width="0.55" />
<rect x="49.70" y="48.90" width="5.6" height="5" fill="none" stroke="#1c2a70" stroke-width="0.9" stroke-dasharray="1.5 0.55"/>
<path d="M55.4,52.5 V54.3 H54.0" fill="none" stroke="#c83028" stroke-width="0.55" />
<path d="M61.5,48.4 V51.6 L59.2,54.6 M61.5,51.6 L63.8,54.6" fill="none" stroke="#2a3f88" stroke-width="0.6" />
<circle cx="61.50" cy="48.40" r="0.5" fill="#c83028"/>
<path d="M108,48.6 V51.4 L105.8,54.2 M108,51.4 L110.4,54.2" fill="none" stroke="#2a6ac0" stroke-width="0.6" />
<circle cx="108.00" cy="48.60" r="0.6" fill="#c83028"/>
<circle cx="110.40" cy="54.20" r="0.5" fill="#c83028"/>
<rect x="0.80" y="47.60" width="112.00" height="8.00" fill="none" stroke="#dcdcdc" stroke-width="0.35"/>
<rect x="21.60" y="58.60" width="12.60" height="10.00" fill="#ffffff" stroke="#d8d8d8" stroke-width="0.35"/>
<rect x="57.60" y="60.00" width="3.20" height="6.20" fill="#e4e8ee" stroke="#7a8088" stroke-width="0.35"/>
<line x1="58.40" y1="61.60" x2="60.00" y2="61.60" stroke="#555" stroke-width="0.4" />
<line x1="58.40" y1="63.00" x2="60.00" y2="63.00" stroke="#555" stroke-width="0.4" />
<line x1="58.40" y1="64.40" x2="60.00" y2="64.40" stroke="#555" stroke-width="0.4" />
<rect x="117.00" y="60.00" width="3.20" height="6.20" fill="#e4e8ee" stroke="#7a8088" stroke-width="0.35"/>
<line x1="117.80" y1="61.60" x2="119.40" y2="61.60" stroke="#555" stroke-width="0.4" />
<line x1="117.80" y1="63.00" x2="119.40" y2="63.00" stroke="#555" stroke-width="0.4" />
<line x1="117.80" y1="64.40" x2="119.40" y2="64.40" stroke="#555" stroke-width="0.4" />
<rect x="624.60" y="61.20" width="1.00" height="4.00" fill="#27457f"/>
<rect x="626.40" y="61.20" width="1.00" height="4.00" fill="#27457f"/>
<rect x="633.70" y="61.20" width="0.80" height="4.00" fill="#27457f"/>
<path d="M634.5,63.2 L636.7,61.2 V65.2 Z M636.7,63.2 L639.2,61.2 V65.2 Z" fill="#27457f" />
<path d="M645.1,63.2 L647.7,61.1 V65.3 Z" fill="#27457f" />
<rect x="648.20" y="61.20" width="0.80" height="4.00" fill="#27457f"/>
<rect x="655.90" y="61.20" width="0.80" height="4.00" fill="#27457f"/>
<path d="M659.9,63.2 L657.3,61.1 V65.3 Z" fill="#27457f" />
<path d="M665.8,61.2 L668.3,63.2 L665.8,65.2 Z M668.3,61.2 L670.5,63.2 L668.3,65.2 Z" fill="#27457f" />
<rect x="670.50" y="61.20" width="0.80" height="4.00" fill="#27457f"/>
<line x1="675.50" y1="59.80" x2="675.50" y2="66.60" stroke="#d0d0d0" stroke-width="0.5" />
<path d="M681.4,60.8 L684,65.4 M682.2,60.4 Q684.6,60.2 684.8,62.8" fill="none" stroke="#9aa0b0" stroke-width="0.7" />
<rect x="690.20" y="60.60" width="7.40" height="5.60" fill="#8890a0" stroke="#5a6270" stroke-width="0.4" rx="0.6"/>
<rect x="692.20" y="59.80" width="3.00" height="1.00" fill="#8890a0"/>
<rect x="692.40" y="61.80" width="3.20" height="3.20" fill="#e8ecf0"/>
<rect x="701.20" y="60.60" width="7.40" height="5.60" fill="#8890a0" stroke="#5a6270" stroke-width="0.4" rx="0.6"/>
<rect x="703.20" y="59.80" width="3.00" height="1.00" fill="#8890a0"/>
<rect x="704.20" y="61.60" width="3.80" height="4.00" fill="#e8ecf0"/>
<path d="M92.2,62.6 L93.2,63.8 L94.2,62.6" fill="none" stroke="#666" stroke-width="0.4" />
<path d="M193.4,62.6 L194.4,63.8 L195.4,62.6" fill="none" stroke="#666" stroke-width="0.4" />
<path d="M228.6,10.6 L228.6,14.6 L229.6,13.8 L230.3,15.2 L230.9,14.9 L230.3,13.6 L231.4,13.5 Z" fill="#222" />
<path d="M232,11.2 Q233.2,10.2 233.6,11.4 Q233.4,12.2 232.8,12.6 M232.8,13.6 V14" fill="none" stroke="#222" stroke-width="0.5" />
<path d="M3.2,71.6 L4.2,73 H2.2 Z M3.2,76.6 L4.2,75.2 H2.2 Z" fill="#707070" />
<rect x="8.80" y="72.00" width="4.40" height="3.80" fill="none" stroke="#c4c4c4" stroke-width="0.5"/>
<line x1="10.00" y1="72.00" x2="10.00" y2="75.80" stroke="#c4c4c4" stroke-width="0.4" />
<path d="M18.4,72 L22,75.8 M18.4,72 L19.4,71.6 L22.8,75.2" fill="none" stroke="#c8c8c8" stroke-width="0.5" />
<path d="M28.6,73.4 Q28.6,71 30.2,71 Q31.8,71 31.8,73.4 Q31.6,74.6 31,75.2 V76.2 H29.4 V75.2 Q28.8,74.6 28.6,73.4 Z" fill="#f4e040" stroke="#403820" stroke-width="0.45" />
<line x1="29.40" y1="76.90" x2="31.00" y2="76.90" stroke="#403820" stroke-width="0.5" />
<rect x="3.00" y="90.20" width="4.00" height="3.60" fill="#f0e050" stroke="#a08820" stroke-width="0.4" rx="0.4"/>
<path d="M3.8,90.2 V89 Q5,87.6 6.2,89 V90.2" fill="none" stroke="#a09040" stroke-width="0.5" />
<line x1="11.00" y1="375.30" x2="20.00" y2="375.30" stroke="#a8a8a8" stroke-width="0.6" />
<rect x="37.50" y="72.00" width="6.40" height="3.60" fill="#dcc050" stroke="#8a7020" stroke-width="0.35"/>
<line x1="38.10" y1="72.00" x2="38.10" y2="77.60" stroke="#8a7020" stroke-width="0.45" />
<line x1="39.85" y1="72.00" x2="39.85" y2="77.60" stroke="#8a7020" stroke-width="0.45" />
<line x1="41.60" y1="72.00" x2="41.60" y2="77.60" stroke="#8a7020" stroke-width="0.45" />
<line x1="43.35" y1="72.00" x2="43.35" y2="77.60" stroke="#8a7020" stroke-width="0.45" />
<rect x="47.50" y="71.80" width="6.40" height="5.20" fill="#dcc050" stroke="#8a7020" stroke-width="0.35"/>
<rect x="48.70" y="73.00" width="2.20" height="1.80" fill="#f0dc90"/>
<rect x="51.30" y="74.20" width="2.00" height="1.80" fill="#b89030"/>
<rect x="37.50" y="82.20" width="6.40" height="5.20" fill="#dcc050" stroke="#8a7020" stroke-width="0.35"/>
<rect x="38.70" y="83.40" width="2.20" height="1.80" fill="#f0dc90"/>
<rect x="41.30" y="84.60" width="2.00" height="1.80" fill="#b89030"/>
<rect x="47.50" y="82.00" width="3.20" height="2.60" fill="#3a5a3a" stroke="#303030" stroke-width="0.3"/>
<rect x="50.30" y="84.60" width="0.90" height="0.90" fill="#c8a850"/>
<line x1="51.60" y1="85.05" x2="53.90" y2="85.05" stroke="#6a7a90" stroke-width="0.45" />
<rect x="50.30" y="86.00" width="0.90" height="0.90" fill="#c8a850"/>
<line x1="51.60" y1="86.45" x2="53.90" y2="86.45" stroke="#6a7a90" stroke-width="0.45" />
<rect x="50.30" y="87.40" width="0.90" height="0.90" fill="#c8a850"/>
<line x1="51.60" y1="87.85" x2="53.90" y2="87.85" stroke="#6a7a90" stroke-width="0.45" />
<line x1="36.50" y1="90.60" x2="55.50" y2="90.60" stroke="#dcdcdc" stroke-width="0.4" />
<path d="M38.1,93.8 H40.1 V97.39999999999999 H43.7 V99.6 H38.1 Z" fill="#dcc050" stroke="#8a7020" stroke-width="0.4" />
<path d="M48.1,93.8 H50.1 V97.39999999999999 H53.7 V99.6 H48.1 Z" fill="#dcc050" stroke="#8a7020" stroke-width="0.4" />
<rect x="36.80" y="103.40" width="8.00" height="7.80" fill="#cfe3f8" stroke="#9cc0e8" stroke-width="0.35"/>
<path d="M37.900000000000006,103.9 H40.1 V107.6 H43.7 V110.4 H37.900000000000006 Z" fill="#38c838" />
<path d="M37.900000000000006,103.9 H40.1 V105.6 H37.900000000000006 Z" fill="#e03020" />
<path d="M37.900000000000006,105.6 H40.1 V107 H37.900000000000006 Z" fill="#f0c020" />
<path d="M41.300000000000004,107.6 H43.7 V110.4 H41.300000000000004 Z" fill="#2060e0" />
<rect x="47.70" y="104.40" width="2.60" height="2.60" fill="#38b838" stroke="#504020" stroke-width="0.3"/>
<path d="M48.300000000000004,107.60000000000001 V110.0 H51.1" fill="none" stroke="#c8a040" stroke-width="0.8" />
<rect x="50.90" y="106.60" width="0.80" height="0.80" fill="#c8a850"/>
<line x1="52.10" y1="107.00" x2="53.90" y2="107.00" stroke="#6a7a90" stroke-width="0.45" />
<rect x="50.90" y="108.00" width="0.80" height="0.80" fill="#c8a850"/>
<line x1="52.10" y1="108.40" x2="53.90" y2="108.40" stroke="#6a7a90" stroke-width="0.45" />
<rect x="50.90" y="109.40" width="0.80" height="0.80" fill="#c8a850"/>
<line x1="52.10" y1="109.80" x2="53.90" y2="109.80" stroke="#6a7a90" stroke-width="0.45" />
<path d="M37.900000000000006,114.5 H39.7 V117.89999999999999 H42.7 V119.89999999999999 H37.900000000000006 Z" fill="#dcc050" stroke="#8a7020" stroke-width="0.4" />
<rect x="47.70" y="114.30" width="2.60" height="2.60" fill="#d08030" stroke="#504020" stroke-width="0.3"/>
<path d="M48.300000000000004,117.5 V119.89999999999999 H51.1" fill="none" stroke="#c8a040" stroke-width="0.8" />
<rect x="50.90" y="116.50" width="0.80" height="0.80" fill="#c8a850"/>
<line x1="52.10" y1="116.90" x2="53.90" y2="116.90" stroke="#6a7a90" stroke-width="0.45" />
<rect x="50.90" y="117.90" width="0.80" height="0.80" fill="#c8a850"/>
<line x1="52.10" y1="118.30" x2="53.90" y2="118.30" stroke="#6a7a90" stroke-width="0.45" />
<rect x="50.90" y="119.30" width="0.80" height="0.80" fill="#c8a850"/>
<line x1="52.10" y1="119.70" x2="53.90" y2="119.70" stroke="#6a7a90" stroke-width="0.45" />
<path d="M38.1,124 H40.1 V127.6 H43.7 V129.8 H38.1 Z" fill="#dcc050" stroke="#8a7020" stroke-width="0.4" />
<rect x="47.70" y="124.20" width="2.60" height="2.60" fill="#c8a040" stroke="#504020" stroke-width="0.3"/>
<path d="M48.300000000000004,127.4 V129.8 H51.1" fill="none" stroke="#c8a040" stroke-width="0.8" />
<rect x="50.90" y="126.40" width="0.80" height="0.80" fill="#c8a850"/>
<line x1="52.10" y1="126.80" x2="53.90" y2="126.80" stroke="#6a7a90" stroke-width="0.45" />
<rect x="50.90" y="127.80" width="0.80" height="0.80" fill="#c8a850"/>
<line x1="52.10" y1="128.20" x2="53.90" y2="128.20" stroke="#6a7a90" stroke-width="0.45" />
<rect x="50.90" y="129.20" width="0.80" height="0.80" fill="#c8a850"/>
<line x1="52.10" y1="129.60" x2="53.90" y2="129.60" stroke="#6a7a90" stroke-width="0.45" />
<path d="M38.1,133.20000000000002 Q43.300000000000004,133.20000000000002 43.300000000000004,138.60000000000002 H41.300000000000004 Q41.300000000000004,135.20000000000002 38.1,135.20000000000002 Z" fill="#d8b450" stroke="#8a6a20" stroke-width="0.4" />
<path d="M48.1,133.20000000000002 Q52.300000000000004,133.20000000000002 52.300000000000004,137.60000000000002" fill="none" stroke="#8a6a20" stroke-width="0.9" />
<line x1="51.30" y1="136.40" x2="53.90" y2="136.40" stroke="#6a7a90" stroke-width="0.45" />
<line x1="51.30" y1="137.60" x2="53.90" y2="137.60" stroke="#6a7a90" stroke-width="0.45" />
<line x1="51.30" y1="138.80" x2="53.90" y2="138.80" stroke="#6a7a90" stroke-width="0.45" />
<line x1="36.50" y1="141.70" x2="55.50" y2="141.70" stroke="#dcdcdc" stroke-width="0.4" />
<rect x="37.60" y="146.80" width="6.20" height="5.60" fill="#eceef0" stroke="#707880" stroke-width="0.4"/>
<rect x="37.60" y="146.80" width="6.20" height="1.20" fill="#b04838"/>
<path d="M38.300000000000004,151.4 L40.1,149.6 L41.5,150.6 L43.1,148.79999999999998" fill="none" stroke="#7a8a70" stroke-width="0.5" />
<rect x="46.80" y="145.80" width="8.00" height="7.60" fill="#d6e6f6"/>
<rect x="47.60" y="146.80" width="6.20" height="5.60" fill="#eceef0" stroke="#707880" stroke-width="0.4"/>
<rect x="47.60" y="146.80" width="6.20" height="1.20" fill="#b04838"/>
<path d="M48.300000000000004,151.4 L50.1,149.6 L51.5,150.6 L53.1,148.79999999999998" fill="none" stroke="#7a8a70" stroke-width="0.5" />
<rect x="37.60" y="155.70" width="6.20" height="5.60" fill="#eceef0" stroke="#707880" stroke-width="0.4"/>
<rect x="37.60" y="155.70" width="6.20" height="1.20" fill="#b04838"/>
<path d="M38.300000000000004,160.3 L40.1,158.5 L41.5,159.5 L43.1,157.7" fill="none" stroke="#7a8a70" stroke-width="0.5" />
<rect x="47.50" y="155.50" width="3.20" height="2.60" fill="#506890" stroke="#303030" stroke-width="0.3"/>
<rect x="50.30" y="158.10" width="0.90" height="0.90" fill="#c8a850"/>
<line x1="51.60" y1="158.55" x2="53.90" y2="158.55" stroke="#6a7a90" stroke-width="0.45" />
<rect x="50.30" y="159.50" width="0.90" height="0.90" fill="#c8a850"/>
<line x1="51.60" y1="159.95" x2="53.90" y2="159.95" stroke="#6a7a90" stroke-width="0.45" />
<rect x="50.30" y="160.90" width="0.90" height="0.90" fill="#c8a850"/>
<line x1="51.60" y1="161.35" x2="53.90" y2="161.35" stroke="#6a7a90" stroke-width="0.45" />
<line x1="36.50" y1="164.50" x2="55.50" y2="164.50" stroke="#dcdcdc" stroke-width="0.4" />
<path d="M40.7,168.6 V171.4 L38.1,174.4 M40.7,171.4 L43.300000000000004,174.4" fill="none" stroke="#2a6ac0" stroke-width="0.6" />
<circle cx="40.70" cy="168.60" r="0.6" fill="#2a6ac0"/>
<circle cx="38.10" cy="174.40" r="0.6" fill="#2a6ac0"/>
<circle cx="43.30" cy="174.40" r="0.6" fill="#2a6ac0"/>
<rect x="47.60" y="168.60" width="6.20" height="5.60" fill="#eef2f6" stroke="#4a6a94" stroke-width="0.4"/>
<rect x="47.60" y="168.60" width="6.20" height="1.50" fill="#2e5e9e"/>
<rect x="48.40" y="170.90" width="4.60" height="1.00" fill="#c8a850"/>
<rect x="48.40" y="172.50" width="4.60" height="1.00" fill="#c8a850"/>
<line x1="36.50" y1="177.00" x2="55.50" y2="177.00" stroke="#dcdcdc" stroke-width="0.4" />
<rect x="37.60" y="180.40" width="6.20" height="5.60" fill="#f4ecec" stroke="#a06060" stroke-width="0.4"/>
<rect x="37.60" y="180.40" width="6.20" height="1.30" fill="#c07070"/>
<line x1="40.70" y1="181.70" x2="40.70" y2="186.00" stroke="#a06060" stroke-width="0.4" />
<rect x="47.60" y="180.40" width="6.20" height="5.60" fill="#eef2f6" stroke="#4a6a94" stroke-width="0.4"/>
<rect x="47.60" y="180.40" width="6.20" height="1.50" fill="#2e5e9e"/>
<rect x="48.40" y="182.70" width="4.60" height="1.00" fill="#c8a850"/>
<rect x="48.40" y="184.30" width="4.60" height="1.00" fill="#c8a850"/>
<path d="M37.7,193.2 H42.300000000000004" fill="none" stroke="#3060c0" stroke-width="0.6" />
<path d="M43.5,193.2 L41.900000000000006,192.2 V194.2 Z" fill="#3060c0" />
<circle cx="37.70" cy="193.20" r="0.5" fill="#3060c0"/>
<path d="M47.7,194.8 L49.5,191.8 L51.300000000000004,194.4 L53.300000000000004,191.6" fill="none" stroke="#e04030" stroke-width="0.55" stroke-dasharray="0.9 0.6"/>
<line x1="36.50" y1="198.80" x2="55.50" y2="198.80" stroke="#dcdcdc" stroke-width="0.4" />
<path d="M37.900000000000006,207.1 L40.1,203.3 L43.5,204.5 L41.7,208.1 Z" fill="#d8c060" stroke="#8a7a30" stroke-width="0.4" />
<path d="M47.900000000000006,207.1 L50.1,203.3 L53.5,204.5 L51.7,208.1 Z" fill="#a8c8a0" stroke="#5a8a60" stroke-width="0.4" />
<rect x="50.10" y="204.10" width="3.40" height="3.60" fill="#c8dcf0" stroke="#6a8ab0" stroke-width="0.3"/>
<line x1="36.50" y1="211.60" x2="55.50" y2="211.60" stroke="#dcdcdc" stroke-width="0.4" />
<rect x="37.70" y="216.80" width="2.80" height="3.60" fill="#38a848" stroke="#206030" stroke-width="0.3"/>
<rect x="40.70" y="215.00" width="2.80" height="5.40" fill="#3a6ab0" stroke="#204070" stroke-width="0.3"/>
<rect x="47.60" y="215.00" width="6.20" height="5.60" fill="#eef2f6" stroke="#4a6a94" stroke-width="0.4"/>
<rect x="47.60" y="215.00" width="6.20" height="1.50" fill="#2e5e9e"/>
<rect x="48.40" y="217.30" width="4.60" height="1.00" fill="#c8a850"/>
<rect x="48.40" y="218.90" width="4.60" height="1.00" fill="#c8a850"/>
<path d="M40.1,227.2 V232.8" fill="none" stroke="#d0a040" stroke-width="1.2" />
<path d="M43.7,228 L41.1,230 L43.7,232" fill="none" stroke="#d03030" stroke-width="0.6" />
<rect x="47.60" y="227.20" width="6.20" height="5.60" fill="#eef2f6" stroke="#4a6a94" stroke-width="0.4"/>
<rect x="47.60" y="227.20" width="6.20" height="1.50" fill="#2e5e9e"/>
<rect x="48.40" y="229.50" width="4.60" height="1.00" fill="#c8a850"/>
<rect x="48.40" y="231.10" width="4.60" height="1.00" fill="#c8a850"/>
<rect x="37.50" y="240.10" width="6.40" height="5.20" fill="#28a038" stroke="#105020" stroke-width="0.35"/>
<rect x="37.50" y="241.90" width="6.40" height="1.60" fill="#e8e040"/>
<rect x="39.50" y="240.10" width="2.00" height="5.20" fill="#1840a0" opacity="0.8"/>
<rect x="47.60" y="239.90" width="6.20" height="5.60" fill="#eef2f6" stroke="#4a6a94" stroke-width="0.4"/>
<rect x="47.60" y="239.90" width="6.20" height="1.50" fill="#2e5e9e"/>
<rect x="48.40" y="242.20" width="4.60" height="1.00" fill="#c8a850"/>
<rect x="48.40" y="243.80" width="4.60" height="1.00" fill="#c8a850"/>
<rect x="37.70" y="251.40" width="2.40" height="2.40" fill="#2a4a8a"/>
<path d="M39.7,253.4 Q43.1,253.8 42.300000000000004,257.2" fill="none" stroke="#3a6ab0" stroke-width="1.3" />
<rect x="47.60" y="251.60" width="6.20" height="5.60" fill="#eef2f6" stroke="#4a6a94" stroke-width="0.4"/>
<rect x="47.60" y="251.60" width="6.20" height="1.50" fill="#2e5e9e"/>
<rect x="48.40" y="253.90" width="4.60" height="1.00" fill="#c8a850"/>
<rect x="48.40" y="255.50" width="4.60" height="1.00" fill="#c8a850"/>
<path d="M37.7,264.09999999999997 L41.300000000000004,267.7" fill="none" stroke="#303030" stroke-width="1.1" />
<path d="M41.1,268.09999999999997 L42.300000000000004,269.5 L44.1,267.3" fill="none" stroke="#30a030" stroke-width="0.7" />
<path d="M39.4,372.8 H43.4 M39.4,372.8 L40.8,371.6 M39.4,372.8 L40.8,374" fill="none" stroke="#707070" stroke-width="0.5" />
<circle cx="48.20" cy="372.80" r="2.6" fill="#fbf4f4"/>
<path d="M46.8,371.2 L49.7,374.4 M49.7,371.2 L46.8,374.4" fill="none" stroke="#c82828" stroke-width="0.6" />
<rect x="4.20" y="383.00" width="6.40" height="5.00" fill="#f4f0d8" stroke="#6a6a6a" stroke-width="0.5"/>
<path d="M709.6,383.4 H711.6 L710.6,384.8 Z" fill="#707070" />
<rect x="713.60" y="381.00" width="6.40" height="6.40" fill="#f0f0f0" stroke="#d8d8d8" stroke-width="0.3"/>
<path d="M614.4,37.4 L614.4,42.6 L615.7,41.5 L616.6,43.5 L617.3,43.2 L616.5,41.2 L618.1,41.1 Z" fill="#ffffff" stroke="#404040" stroke-width="0.4" />
<circle cx="10.20" cy="396.20" r="3.2" fill="#f29018"/>
<circle cx="9.60" cy="397.00" r="2" fill="#f8a828"/>
<circle cx="13.70" cy="393.00" r="2.3" fill="#c83020"/>
<rect x="13.40" y="392.00" width="0.60" height="2.00" fill="#f8d0c0"/>
<rect x="216.60" y="392.60" width="3.20" height="3.20" fill="#1a8ae8"/>
<rect x="216.60" y="396.20" width="3.20" height="3.20" fill="#1a8ae8"/>
<rect x="220.20" y="392.60" width="3.20" height="3.20" fill="#1a8ae8"/>
<rect x="220.20" y="396.20" width="3.20" height="3.20" fill="#1470d0"/>
<rect x="230.00" y="391.00" width="74.40" height="10.60" fill="#f2f6f8" stroke="#e2e8ec" stroke-width="0.3" rx="5.3"/>
<circle cx="234.60" cy="395.80" r="1.5" fill="none" stroke="#333" stroke-width="0.5"/>
<line x1="235.70" y1="397.00" x2="236.90" y2="398.30" stroke="#333" stroke-width="0.55" />
<path d="M289.6,398.6 Q290,393.4 295,393 Q300,392.8 302.6,397.4 L303.2,399 L300,398 L297,399.2 L293,398.4 Z" fill="#6a7078" stroke="#484e56" stroke-width="0.3" />
<path d="M289.4,395.4 L291,393.6 L291.2,396" fill="#e8c030" />
<rect x="310.60" y="392.80" width="6.40" height="6.40" fill="#f4f4f4" stroke="#202020" stroke-width="0.4"/>
<rect x="310.60" y="396.00" width="3.00" height="3.20" fill="#181818"/>
<rect x="313.60" y="392.80" width="3.40" height="3.20" fill="#f8f8f8"/>
<rect x="326.40" y="393.00" width="7.20" height="5.80" fill="#2a2e34" rx="0.8"/>
<path d="M328,394.6 L329.8,395.9 L328,397.2" fill="none" stroke="#fff" stroke-width="0.5" />
<line x1="330.40" y1="397.20" x2="332.00" y2="397.20" stroke="#fff" stroke-width="0.5" />
<path d="M342,393.4 H344.6 L345.4,394.2 H349 V399.4 H342 Z" fill="#f4c430" />
<rect x="342.00" y="395.20" width="7.00" height="4.20" fill="#fad860"/>
<rect x="342.00" y="398.20" width="7.00" height="1.20" fill="#3a90e0"/>
<rect x="356.40" y="392.60" width="7.20" height="6.80" fill="#d8ecfa" stroke="#a8c8e4" stroke-width="0.3" rx="0.8"/>
<rect x="357.40" y="396.40" width="0.90" height="2.20" fill="#4a9ae0"/>
<rect x="358.90" y="395.00" width="0.90" height="3.60" fill="#4a9ae0"/>
<rect x="360.40" y="395.80" width="0.90" height="2.80" fill="#4a9ae0"/>
<rect x="361.90" y="394.40" width="0.90" height="4.20" fill="#4a9ae0"/>
<circle cx="376.70" cy="396.00" r="3.4" fill="#e8b820"/>
<path d="M376.7,396 L373.6,394.4 A3.4,3.4 0 0 1 379.9,394.8 Z" fill="#d83828" />
<path d="M376.7,396 L379.9,394.8 A3.4,3.4 0 0 1 376,399.3 Z" fill="#38a048" />
<circle cx="376.70" cy="396.00" r="1.5" fill="#fff"/>
<circle cx="376.70" cy="396.00" r="1.15" fill="#3a78e0"/>
<rect x="388.80" y="392.60" width="6.80" height="6.80" fill="#c81830" rx="0.6"/>
<path d="M390.4,394.2 H394 V397.8 L392.8,396.6 V395.4 H391.6 Z" fill="#fff" />
<path d="M390.4,397.8 L391.8,396.2 V397.8 Z" fill="#fff" />
<path d="M404.4,396 L409.6,392.6 L411.2,393.4 V398.6 L409.6,399.4 L404.4,396 Z" fill="#1f8ad8" />
<path d="M406.4,396 L409.4,394 V398 Z" fill="#dff0fc" />
<path d="M404.4,394.4 L405.2,393.8 L411,398.4 L409.6,399.4 Z" fill="#1874c0" />
<path d="M420.8,394.6 L422,393.4 H424 L425.2,394.6 L425.6,398.8 H420.4 Z" fill="#1e3070" />
<rect x="434.40" y="392.60" width="6.80" height="6.80" fill="#e82860" rx="1.2"/>
<rect x="436.00" y="394.60" width="3.60" height="2.80" fill="#fff" rx="0.6"/>
<circle cx="453.80" cy="396.00" r="3.4" fill="#8a8420" stroke="#5a5610" stroke-width="0.4"/>
<path d="M452,394.4 L455.6,397.6 M455.6,394.4 L452,397.6" fill="none" stroke="#e8e090" stroke-width="0.6" />
<rect x="462.00" y="389.40" width="13.80" height="14.40" fill="#f0f5f8" stroke="#e4eaee" stroke-width="0.3" rx="1.4"/>
<circle cx="468.90" cy="396.00" r="3.2" fill="#f4f4fa" stroke="#7060b0" stroke-width="0.5"/>
<path d="M465.8,396 H472 M466.6,394.4 H471.2 M466.6,397.6 H471.2" fill="none" stroke="#4858b0" stroke-width="0.6" />
<path d="M481.0,399 L482.4,393 H483.6 L482.2,399 Z" fill="#d02828" />
<path d="M482.9,399 L484.29999999999995,393 H485.5 L484.09999999999997,399 Z" fill="#2868c8" />
<path d="M484.8,399 L486.2,393 H487.40000000000003 L486.0,399 Z" fill="#28a048" />
<path d="M486.7,399 L488.09999999999997,393 H489.3 L487.9,399 Z" fill="#303030" />
<circle cx="500.60" cy="396.20" r="3.3" fill="#484848" stroke="#282828" stroke-width="0.4"/>
<circle cx="500.60" cy="396.20" r="1.5" fill="#b8b8b8"/>
<circle cx="503.00" cy="393.60" r="1.5" fill="#e83030"/>
<rect x="329.00" y="402.20" width="2.00" height="0.70" fill="#8a9098" rx="0.3"/>
<rect x="344.50" y="402.20" width="2.00" height="0.70" fill="#8a9098" rx="0.3"/>
<rect x="359.00" y="402.20" width="2.00" height="0.70" fill="#8a9098" rx="0.3"/>
<rect x="375.70" y="402.20" width="2.00" height="0.70" fill="#8a9098" rx="0.3"/>
<rect x="391.20" y="402.20" width="2.00" height="0.70" fill="#8a9098" rx="0.3"/>
<rect x="406.80" y="402.20" width="2.00" height="0.70" fill="#8a9098" rx="0.3"/>
<rect x="421.90" y="402.20" width="2.00" height="0.70" fill="#8a9098" rx="0.3"/>
<rect x="436.80" y="402.20" width="2.00" height="0.70" fill="#8a9098" rx="0.3"/>
<rect x="452.80" y="402.20" width="2.00" height="0.70" fill="#8a9098" rx="0.3"/>
<rect x="483.40" y="402.20" width="2.00" height="0.70" fill="#8a9098" rx="0.3"/>
<rect x="500.00" y="402.20" width="2.00" height="0.70" fill="#8a9098" rx="0.3"/>
<rect x="465.90" y="402.10" width="6.00" height="0.90" fill="#5a70a8" rx="0.4"/>
<path d="M644,397.2 L645.6,395.4 L647.2,397.2" fill="none" stroke="#333" stroke-width="0.55" />
<circle cx="667.40" cy="396.20" r="2.4" fill="#5a6068" stroke="#3a4048" stroke-width="0.3"/>
<path d="M666.2,396.2 H668.6 M667.4,395 V397.4" fill="none" stroke="#e8e8e8" stroke-width="0.5" />
<path d="M673.8,395.4 H674.8 L676,394.4 V398 L674.8,397 H673.8 Z" fill="#444" />
<path d="M676.8,395.2 Q677.6,396.2 676.8,397.2" fill="none" stroke="#444" stroke-width="0.4" />
<path d="M708.6,394.8 H711.6 V398 H708.6 Z" fill="none" stroke="#444" stroke-width="0.45" />
<path d="M710.4,396.2 L712.4,394" fill="none" stroke="#444" stroke-width="0.5" />
<path d="M685.4,369.6 Q688.4,369 687.6,371 Q686.6,372.2 685.6,372.4 Q688.6,372.4 688.2,374.4 Q687.6,376 685.4,375.6 M682.2,376.6 Q684,373 686.4,373.6 M683.2,374.8 L685.8,374.2" fill="none" stroke="#3aa9a0" stroke-width="0.65" />
</svg>
<div class="t" style="left:0;top:0;font-size:4.8px;color:#333;transform:translate(8.00px,2.76px) scaleX(0.860) rotate(0.03deg);transform-origin:0 0;">Abaqus/CAE 2018 [Viewport: 1]</div>
<div class="t" style="left:0;top:0;font-size:4.8px;color:#1c1c1c;transform:translate(10.50px,11.66px) scaleX(0.840) rotate(0.03deg);transform-origin:0 0;">File</div>
<div class="t" style="left:0;top:0;font-size:4.8px;color:#1c1c1c;transform:translate(23.00px,11.66px) scaleX(0.994) rotate(0.03deg);transform-origin:0 0;">Model</div>
<div class="t" style="left:0;top:0;font-size:4.8px;color:#1c1c1c;transform:translate(42.00px,11.66px) scaleX(0.968) rotate(0.03deg);transform-origin:0 0;">Viewport</div>
<div class="t" style="left:0;top:0;font-size:4.8px;color:#1c1c1c;transform:translate(66.00px,11.66px) scaleX(0.872) rotate(0.03deg);transform-origin:0 0;">View</div>
<div class="t" style="left:0;top:0;font-size:4.8px;color:#1c1c1c;transform:translate(81.50px,11.66px) scaleX(0.882) rotate(0.03deg);transform-origin:0 0;">Result</div>
<div class="t" style="left:0;top:0;font-size:4.8px;color:#1c1c1c;transform:translate(99.00px,11.66px) scaleX(0.846) rotate(0.03deg);transform-origin:0 0;">Plot</div>
<div class="t" style="left:0;top:0;font-size:4.8px;color:#1c1c1c;transform:translate(112.00px,11.66px) scaleX(0.937) rotate(0.03deg);transform-origin:0 0;">Animate</div>
<div class="t" style="left:0;top:0;font-size:4.8px;color:#1c1c1c;transform:translate(134.50px,11.66px) scaleX(0.972) rotate(0.03deg);transform-origin:0 0;">Report</div>
<div class="t" style="left:0;top:0;font-size:4.8px;color:#1c1c1c;transform:translate(154.00px,11.66px) scaleX(0.967) rotate(0.03deg);transform-origin:0 0;">Options</div>
<div class="t" style="left:0;top:0;font-size:4.8px;color:#1c1c1c;transform:translate(176.00px,11.66px) scaleX(0.982) rotate(0.03deg);transform-origin:0 0;">Tools</div>
<div class="t" style="left:0;top:0;font-size:4.8px;color:#1c1c1c;transform:translate(192.50px,11.66px) scaleX(0.951) rotate(0.03deg);transform-origin:0 0;">Plug-ins</div>
<div class="t" style="left:0;top:0;font-size:4.8px;color:#1c1c1c;transform:translate(214.50px,11.66px) scaleX(0.861) rotate(0.03deg);transform-origin:0 0;">Help</div>
<div class="t" style="left:0;top:0;font-size:4.8px;color:#222;transform:translate(3.50px,62.16px) scaleX(1.071) rotate(0.03deg);transform-origin:0 0;">Model</div>
<div class="t" style="left:0;top:0;font-size:4.8px;color:#222;transform:translate(22.50px,62.16px) scaleX(0.937) rotate(0.03deg);transform-origin:0 0;">Resul</div>
<div class="t" style="left:0;top:0;font-size:4.8px;color:#222;transform:translate(38.00px,61.76px) scaleX(0.937) rotate(0.03deg);transform-origin:0 0;">Module:</div>
<div class="abs" style="left:56.50px;top:58.80px;width:40.00px;height:8.60px;background:#fff;border:0.5px solid #c2c6cc;box-sizing:border-box;"></div>
<div class="t" style="left:0;top:0;font-size:4.6px;color:#222;transform:translate(62.00px,61.86px) scaleX(0.991) rotate(0.03deg);transform-origin:0 0;">Visualization</div>
<div class="t" style="left:0;top:0;font-size:4.8px;color:#222;transform:translate(100.00px,61.76px) scaleX(0.972) rotate(0.03deg);transform-origin:0 0;">Model:</div>
<div class="abs" style="left:116.00px;top:58.80px;width:81.50px;height:8.60px;background:#fff;border:0.5px solid #c2c6cc;box-sizing:border-box;"></div>
<div class="t" style="left:0;top:0;font-size:4.6px;color:#222;transform:translate(122.00px,61.86px) scaleX(0.997) rotate(0.03deg);transform-origin:0 0;">F:/wechat/ikun/Job-1-videos.odb</div>
<div class="t" style="left:0;top:0;font-size:4.8px;color:#1a1a1a;transform:translate(151.50px,21.36px) scaleX(1.218) rotate(0.03deg);transform-origin:0 0;">All</div>
<div class="t" style="left:0;top:0;font-size:4.7px;color:#222;transform:translate(274.00px,21.41px) scaleX(0.964) rotate(0.03deg);transform-origin:0 0;">Visualization defaults</div>
<div class="t" style="left:0;top:0;font-size:4.7px;color:#222;transform:translate(231.50px,40.81px) scaleX(0.957) rotate(0.03deg);transform-origin:0 0;">Primary</div>
<div class="t" style="left:0;top:0;font-size:4.7px;color:#222;transform:translate(263.50px,40.81px) scaleX(0.855) rotate(0.03deg);transform-origin:0 0;">SDV1</div>
<div class="t" style="left:0;top:0;font-size:6.4px;color:#c42222;font-weight:bold;transform:translate(69.30px,49.21px) scaleX(1.000) rotate(0.03deg);transform-origin:0 0;">1</div>
<div class="t" style="left:0;top:0;font-size:6.4px;color:#c42222;font-weight:bold;transform:translate(78.30px,49.21px) scaleX(1.000) rotate(0.03deg);transform-origin:0 0;">2</div>
<div class="t" style="left:0;top:0;font-size:6.4px;color:#c42222;font-weight:bold;transform:translate(87.80px,49.21px) scaleX(1.000) rotate(0.03deg);transform-origin:0 0;">3</div>
<div class="t" style="left:0;top:0;font-size:6.4px;color:#c42222;font-weight:bold;transform:translate(97.30px,49.21px) scaleX(1.000) rotate(0.03deg);transform-origin:0 0;">4</div>
<div class="t" style="left:0;top:0;font-size:4.7px;color:#222;transform:translate(4.60px,82.61px) scaleX(0.916) rotate(0.03deg);transform-origin:0 0;">Output Databa</div>
<div class="abs" style="left:9.80px;top:87.80px;width:23.20px;height:7.20px;background:#0a6fd6;"></div>
<div class="t" style="left:0;top:0;font-size:4.7px;color:#fff;transform:translate(10.50px,89.91px) scaleX(0.896) rotate(0.03deg);transform-origin:0 0;">Job-1-video</div>
<div class="t" style="left:0;top:0;font-size:4.7px;color:#222;transform:translate(4.60px,97.81px) scaleX(0.957) rotate(0.03deg);transform-origin:0 0;">Model Databa</div>
<div class="t" style="left:0;top:0;font-size:4.7px;color:#222;transform:translate(4.60px,104.81px) scaleX(0.949) rotate(0.03deg);transform-origin:0 0;">Spectrums (7)</div>
<div class="t" style="left:0;top:0;font-size:4.7px;color:#222;transform:translate(4.60px,111.91px) scaleX(0.927) rotate(0.03deg);transform-origin:0 0;">XYPlots</div>
<div class="t" style="left:0;top:0;font-size:4.7px;color:#222;transform:translate(4.60px,119.21px) scaleX(0.895) rotate(0.03deg);transform-origin:0 0;">XYData</div>
<div class="t" style="left:0;top:0;font-size:4.7px;color:#222;transform:translate(4.60px,126.61px) scaleX(0.915) rotate(0.03deg);transform-origin:0 0;">Paths</div>
<div class="t" style="left:0;top:0;font-size:4.7px;color:#222;transform:translate(4.60px,133.91px) scaleX(0.940) rotate(0.03deg);transform-origin:0 0;">Display Group</div>
<div class="t" style="left:0;top:0;font-size:4.7px;color:#222;transform:translate(4.60px,141.21px) scaleX(0.924) rotate(0.03deg);transform-origin:0 0;">Free Body Cut</div>
<div class="t" style="left:0;top:0;font-size:4.7px;color:#222;transform:translate(4.60px,148.81px) scaleX(0.943) rotate(0.03deg);transform-origin:0 0;">Streams</div>
<div class="t" style="left:0;top:0;font-size:4.7px;color:#222;transform:translate(4.60px,156.21px) scaleX(0.940) rotate(0.03deg);transform-origin:0 0;">Movies</div>
<div class="t" style="left:0;top:0;font-size:4.7px;color:#222;transform:translate(4.60px,163.61px) scaleX(0.941) rotate(0.03deg);transform-origin:0 0;">Images</div>
<div class="t" style="left:0;top:0;font-size:4.63px;color:#303030;font-family:'Liberation Mono',monospace;transform:translate(21.70px,382.75px) scaleX(1.009) rotate(0.03deg);transform-origin:0 0;-webkit-text-stroke:0.12px #303030;">frame  1700/1702 ( 99 9%)  elapsed 3402s  ETA 0m03s</div>
<div class="t" style="left:0;top:0;font-size:4.4px;color:#333;transform:translate(18.00px,392.37px) scaleX(0.865) rotate(0.03deg);transform-origin:0 0;">20°C</div>
<div class="t" style="left:0;top:0;font-size:4.0px;color:#444;transform:translate(18.00px,398.58px) scaleX(1.000) rotate(0.03deg);transform-origin:0 0;">晴朗</div>
<div class="t" style="left:0;top:0;font-size:4.6px;color:#555;transform:translate(242.00px,394.96px) scaleX(1.087) rotate(0.03deg);transform-origin:0 0;">搜索</div>
<div class="t" style="left:0;top:0;font-size:5.6px;color:#333;transform:translate(653.70px,394.43px) scaleX(1.000) rotate(0.03deg);transform-origin:0 0;">英</div>
<div class="t" style="left:0;top:0;font-size:4.3px;color:#222;transform:translate(694.20px,392.42px) scaleX(0.976) rotate(0.03deg);transform-origin:0 0;">13:19</div>
<div class="t" style="left:0;top:0;font-size:4.3px;color:#222;transform:translate(685.50px,398.32px) scaleX(1.004) rotate(0.03deg);transform-origin:0 0;">2026/3/28</div>
<div class="t" style="left:0;top:0;font-size:5.2px;color:#3aa9a0;transform:translate(691.30px,372.64px) scaleX(1.298) rotate(0.03deg);transform-origin:0 0;font-style:italic;-webkit-text-stroke:0.1px #3aa9a0;">SIMULIA</div>
</div>
</body>
</html>
